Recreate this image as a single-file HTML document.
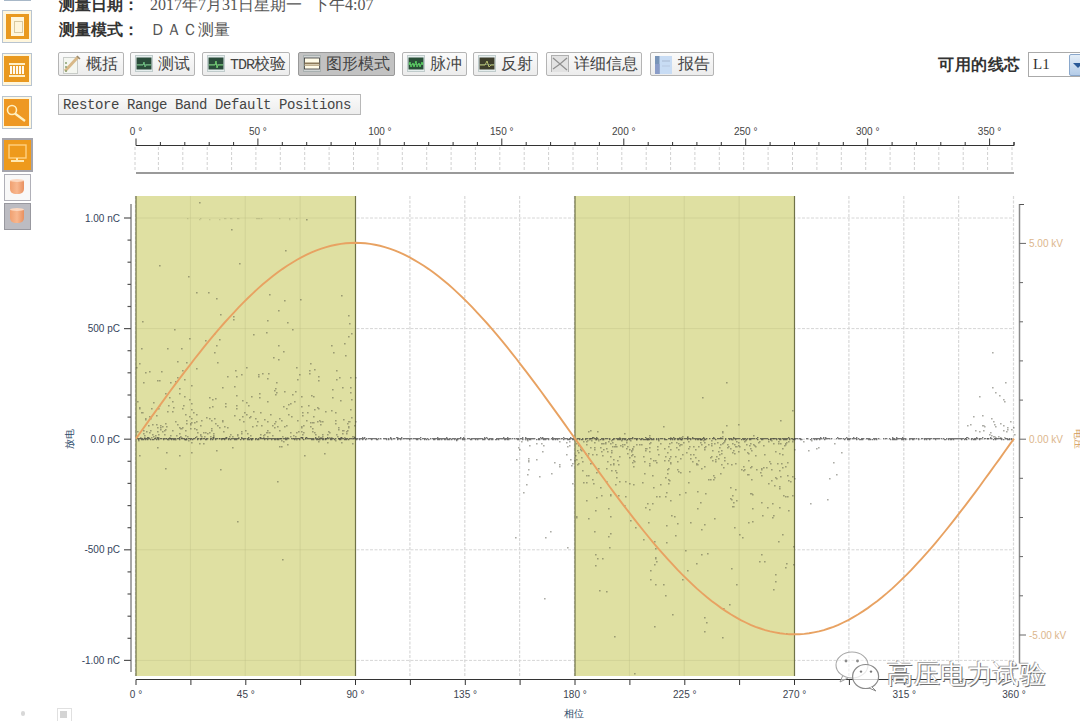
<!DOCTYPE html>
<html><head><meta charset="utf-8">
<style>
html,body{margin:0;padding:0;background:#fff;}
body{width:1080px;height:721px;overflow:hidden;position:relative;font-family:"Liberation Sans",sans-serif;}
.a{position:absolute;}
.lbl{font-weight:bold;font-size:16px;color:#333;}
.val{font-size:16px;color:#555;font-family:"Liberation Serif",serif;}
.btn{position:absolute;top:52px;height:22px;border:1px solid #b4b4b4;border-radius:2px;background:linear-gradient(#fbfbfb,#ececec);font-size:16px;color:#444;line-height:22px;box-sizing:content-box;}
.btn .ic{position:absolute;left:4px;top:2px;}
.btn span{position:absolute;left:27px;top:0;white-space:nowrap;}
.btn.on{background:#c2c2c2;border-color:#999;}
svg text{font-family:"Liberation Sans",sans-serif;}
.rl{font-size:10px;fill:#444;text-anchor:middle;}
.yl{font-size:10px;fill:#34445c;text-anchor:end;}
.yt{font-size:10px;fill:#2c4a6a;text-anchor:middle;}
.rlab{font-size:10px;fill:#dcb68c;}
.rt{font-size:10px;fill:#d49a58;text-anchor:middle;}
.bl{font-size:10px;fill:#3c4450;text-anchor:middle;}
.bt{font-size:10px;fill:#2c4a6a;text-anchor:middle;}
</style></head><body>
<svg class="a" style="left:0;top:0" width="1080" height="721" viewBox="0 0 1080 721">
<line x1="135.0" y1="147" x2="135.0" y2="171" stroke="#d0d0d0" stroke-width="1" stroke-dasharray="3,2"/>
<line x1="158.4" y1="147" x2="158.4" y2="171" stroke="#d0d0d0" stroke-width="1" stroke-dasharray="3,2"/>
<line x1="182.8" y1="147" x2="182.8" y2="171" stroke="#d0d0d0" stroke-width="1" stroke-dasharray="3,2"/>
<line x1="207.2" y1="147" x2="207.2" y2="171" stroke="#d0d0d0" stroke-width="1" stroke-dasharray="3,2"/>
<line x1="231.6" y1="147" x2="231.6" y2="171" stroke="#d0d0d0" stroke-width="1" stroke-dasharray="3,2"/>
<line x1="255.9" y1="147" x2="255.9" y2="171" stroke="#d0d0d0" stroke-width="1" stroke-dasharray="3,2"/>
<line x1="280.3" y1="147" x2="280.3" y2="171" stroke="#d0d0d0" stroke-width="1" stroke-dasharray="3,2"/>
<line x1="304.7" y1="147" x2="304.7" y2="171" stroke="#d0d0d0" stroke-width="1" stroke-dasharray="3,2"/>
<line x1="329.1" y1="147" x2="329.1" y2="171" stroke="#d0d0d0" stroke-width="1" stroke-dasharray="3,2"/>
<line x1="353.5" y1="147" x2="353.5" y2="171" stroke="#d0d0d0" stroke-width="1" stroke-dasharray="3,2"/>
<line x1="377.9" y1="147" x2="377.9" y2="171" stroke="#d0d0d0" stroke-width="1" stroke-dasharray="3,2"/>
<line x1="402.3" y1="147" x2="402.3" y2="171" stroke="#d0d0d0" stroke-width="1" stroke-dasharray="3,2"/>
<line x1="426.7" y1="147" x2="426.7" y2="171" stroke="#d0d0d0" stroke-width="1" stroke-dasharray="3,2"/>
<line x1="451.1" y1="147" x2="451.1" y2="171" stroke="#d0d0d0" stroke-width="1" stroke-dasharray="3,2"/>
<line x1="475.4" y1="147" x2="475.4" y2="171" stroke="#d0d0d0" stroke-width="1" stroke-dasharray="3,2"/>
<line x1="499.8" y1="147" x2="499.8" y2="171" stroke="#d0d0d0" stroke-width="1" stroke-dasharray="3,2"/>
<line x1="524.2" y1="147" x2="524.2" y2="171" stroke="#d0d0d0" stroke-width="1" stroke-dasharray="3,2"/>
<line x1="548.6" y1="147" x2="548.6" y2="171" stroke="#d0d0d0" stroke-width="1" stroke-dasharray="3,2"/>
<line x1="573.0" y1="147" x2="573.0" y2="171" stroke="#d0d0d0" stroke-width="1" stroke-dasharray="3,2"/>
<line x1="597.4" y1="147" x2="597.4" y2="171" stroke="#d0d0d0" stroke-width="1" stroke-dasharray="3,2"/>
<line x1="621.8" y1="147" x2="621.8" y2="171" stroke="#d0d0d0" stroke-width="1" stroke-dasharray="3,2"/>
<line x1="646.2" y1="147" x2="646.2" y2="171" stroke="#d0d0d0" stroke-width="1" stroke-dasharray="3,2"/>
<line x1="670.6" y1="147" x2="670.6" y2="171" stroke="#d0d0d0" stroke-width="1" stroke-dasharray="3,2"/>
<line x1="694.9" y1="147" x2="694.9" y2="171" stroke="#d0d0d0" stroke-width="1" stroke-dasharray="3,2"/>
<line x1="719.3" y1="147" x2="719.3" y2="171" stroke="#d0d0d0" stroke-width="1" stroke-dasharray="3,2"/>
<line x1="743.7" y1="147" x2="743.7" y2="171" stroke="#d0d0d0" stroke-width="1" stroke-dasharray="3,2"/>
<line x1="768.1" y1="147" x2="768.1" y2="171" stroke="#d0d0d0" stroke-width="1" stroke-dasharray="3,2"/>
<line x1="792.5" y1="147" x2="792.5" y2="171" stroke="#d0d0d0" stroke-width="1" stroke-dasharray="3,2"/>
<line x1="816.9" y1="147" x2="816.9" y2="171" stroke="#d0d0d0" stroke-width="1" stroke-dasharray="3,2"/>
<line x1="841.3" y1="147" x2="841.3" y2="171" stroke="#d0d0d0" stroke-width="1" stroke-dasharray="3,2"/>
<line x1="865.7" y1="147" x2="865.7" y2="171" stroke="#d0d0d0" stroke-width="1" stroke-dasharray="3,2"/>
<line x1="890.1" y1="147" x2="890.1" y2="171" stroke="#d0d0d0" stroke-width="1" stroke-dasharray="3,2"/>
<line x1="914.4" y1="147" x2="914.4" y2="171" stroke="#d0d0d0" stroke-width="1" stroke-dasharray="3,2"/>
<line x1="938.8" y1="147" x2="938.8" y2="171" stroke="#d0d0d0" stroke-width="1" stroke-dasharray="3,2"/>
<line x1="963.2" y1="147" x2="963.2" y2="171" stroke="#d0d0d0" stroke-width="1" stroke-dasharray="3,2"/>
<line x1="987.6" y1="147" x2="987.6" y2="171" stroke="#d0d0d0" stroke-width="1" stroke-dasharray="3,2"/>
<line x1="1012.0" y1="147" x2="1012.0" y2="171" stroke="#d0d0d0" stroke-width="1" stroke-dasharray="3,2"/>
<line x1="136.0" y1="145.5" x2="1014.0000000000001" y2="145.5" stroke="#333" stroke-width="1.2"/>
<line x1="136.0" y1="173" x2="1014.0000000000001" y2="173" stroke="#9a9a9a" stroke-width="2"/>
<line x1="136.0" y1="138.5" x2="136.0" y2="145.5" stroke="#333" stroke-width="1"/>
<line x1="160.4" y1="142" x2="160.4" y2="145.5" stroke="#333" stroke-width="1"/>
<line x1="184.8" y1="142" x2="184.8" y2="145.5" stroke="#333" stroke-width="1"/>
<line x1="209.2" y1="142" x2="209.2" y2="145.5" stroke="#333" stroke-width="1"/>
<line x1="233.6" y1="142" x2="233.6" y2="145.5" stroke="#333" stroke-width="1"/>
<line x1="257.9" y1="138.5" x2="257.9" y2="145.5" stroke="#333" stroke-width="1"/>
<line x1="282.3" y1="142" x2="282.3" y2="145.5" stroke="#333" stroke-width="1"/>
<line x1="306.7" y1="142" x2="306.7" y2="145.5" stroke="#333" stroke-width="1"/>
<line x1="331.1" y1="142" x2="331.1" y2="145.5" stroke="#333" stroke-width="1"/>
<line x1="355.5" y1="142" x2="355.5" y2="145.5" stroke="#333" stroke-width="1"/>
<line x1="379.9" y1="138.5" x2="379.9" y2="145.5" stroke="#333" stroke-width="1"/>
<line x1="404.3" y1="142" x2="404.3" y2="145.5" stroke="#333" stroke-width="1"/>
<line x1="428.7" y1="142" x2="428.7" y2="145.5" stroke="#333" stroke-width="1"/>
<line x1="453.1" y1="142" x2="453.1" y2="145.5" stroke="#333" stroke-width="1"/>
<line x1="477.4" y1="142" x2="477.4" y2="145.5" stroke="#333" stroke-width="1"/>
<line x1="501.8" y1="138.5" x2="501.8" y2="145.5" stroke="#333" stroke-width="1"/>
<line x1="526.2" y1="142" x2="526.2" y2="145.5" stroke="#333" stroke-width="1"/>
<line x1="550.6" y1="142" x2="550.6" y2="145.5" stroke="#333" stroke-width="1"/>
<line x1="575.0" y1="142" x2="575.0" y2="145.5" stroke="#333" stroke-width="1"/>
<line x1="599.4" y1="142" x2="599.4" y2="145.5" stroke="#333" stroke-width="1"/>
<line x1="623.8" y1="138.5" x2="623.8" y2="145.5" stroke="#333" stroke-width="1"/>
<line x1="648.2" y1="142" x2="648.2" y2="145.5" stroke="#333" stroke-width="1"/>
<line x1="672.6" y1="142" x2="672.6" y2="145.5" stroke="#333" stroke-width="1"/>
<line x1="696.9" y1="142" x2="696.9" y2="145.5" stroke="#333" stroke-width="1"/>
<line x1="721.3" y1="142" x2="721.3" y2="145.5" stroke="#333" stroke-width="1"/>
<line x1="745.7" y1="138.5" x2="745.7" y2="145.5" stroke="#333" stroke-width="1"/>
<line x1="770.1" y1="142" x2="770.1" y2="145.5" stroke="#333" stroke-width="1"/>
<line x1="794.5" y1="142" x2="794.5" y2="145.5" stroke="#333" stroke-width="1"/>
<line x1="818.9" y1="142" x2="818.9" y2="145.5" stroke="#333" stroke-width="1"/>
<line x1="843.3" y1="142" x2="843.3" y2="145.5" stroke="#333" stroke-width="1"/>
<line x1="867.7" y1="138.5" x2="867.7" y2="145.5" stroke="#333" stroke-width="1"/>
<line x1="892.1" y1="142" x2="892.1" y2="145.5" stroke="#333" stroke-width="1"/>
<line x1="916.4" y1="142" x2="916.4" y2="145.5" stroke="#333" stroke-width="1"/>
<line x1="940.8" y1="142" x2="940.8" y2="145.5" stroke="#333" stroke-width="1"/>
<line x1="965.2" y1="142" x2="965.2" y2="145.5" stroke="#333" stroke-width="1"/>
<line x1="989.6" y1="138.5" x2="989.6" y2="145.5" stroke="#333" stroke-width="1"/>
<line x1="1014.0" y1="142" x2="1014.0" y2="145.5" stroke="#333" stroke-width="1"/>
<line x1="1014.0" y1="142" x2="1014.0" y2="145.5" stroke="#333" stroke-width="1"/>
<text x="136.0" y="135" class="rl">0 °</text>
<text x="257.9" y="135" class="rl">50 °</text>
<text x="379.9" y="135" class="rl">100 °</text>
<text x="501.8" y="135" class="rl">150 °</text>
<text x="623.8" y="135" class="rl">200 °</text>
<text x="745.7" y="135" class="rl">250 °</text>
<text x="867.7" y="135" class="rl">300 °</text>
<text x="989.6" y="135" class="rl">350 °</text>
<line x1="135.5" y1="196" x2="135.5" y2="676" stroke="#d8d8d8" stroke-width="1.2" stroke-dasharray="3,1.5"/>
<line x1="190.4" y1="196" x2="190.4" y2="676" stroke="#d8d8d8" stroke-width="1.2" stroke-dasharray="3,1.5"/>
<line x1="245.2" y1="196" x2="245.2" y2="676" stroke="#d8d8d8" stroke-width="1.2" stroke-dasharray="3,1.5"/>
<line x1="300.1" y1="196" x2="300.1" y2="676" stroke="#d8d8d8" stroke-width="1.2" stroke-dasharray="3,1.5"/>
<line x1="355.0" y1="196" x2="355.0" y2="676" stroke="#d8d8d8" stroke-width="1.2" stroke-dasharray="3,1.5"/>
<line x1="409.9" y1="196" x2="409.9" y2="676" stroke="#d8d8d8" stroke-width="1.2" stroke-dasharray="3,1.5"/>
<line x1="464.8" y1="196" x2="464.8" y2="676" stroke="#d8d8d8" stroke-width="1.2" stroke-dasharray="3,1.5"/>
<line x1="519.6" y1="196" x2="519.6" y2="676" stroke="#d8d8d8" stroke-width="1.2" stroke-dasharray="3,1.5"/>
<line x1="574.5" y1="196" x2="574.5" y2="676" stroke="#d8d8d8" stroke-width="1.2" stroke-dasharray="3,1.5"/>
<line x1="629.4" y1="196" x2="629.4" y2="676" stroke="#d8d8d8" stroke-width="1.2" stroke-dasharray="3,1.5"/>
<line x1="684.2" y1="196" x2="684.2" y2="676" stroke="#d8d8d8" stroke-width="1.2" stroke-dasharray="3,1.5"/>
<line x1="739.1" y1="196" x2="739.1" y2="676" stroke="#d8d8d8" stroke-width="1.2" stroke-dasharray="3,1.5"/>
<line x1="794.0" y1="196" x2="794.0" y2="676" stroke="#d8d8d8" stroke-width="1.2" stroke-dasharray="3,1.5"/>
<line x1="848.9" y1="196" x2="848.9" y2="676" stroke="#d8d8d8" stroke-width="1.2" stroke-dasharray="3,1.5"/>
<line x1="903.8" y1="196" x2="903.8" y2="676" stroke="#d8d8d8" stroke-width="1.2" stroke-dasharray="3,1.5"/>
<line x1="958.6" y1="196" x2="958.6" y2="676" stroke="#d8d8d8" stroke-width="1.2" stroke-dasharray="3,1.5"/>
<line x1="1013.5" y1="196" x2="1013.5" y2="676" stroke="#d8d8d8" stroke-width="1.2" stroke-dasharray="3,1.5"/>
<line x1="136.0" y1="218.0" x2="1014.0000000000001" y2="218.0" stroke="#d6d6d6" stroke-width="1" stroke-dasharray="3,1.5"/>
<line x1="136.0" y1="328.6" x2="1014.0000000000001" y2="328.6" stroke="#d6d6d6" stroke-width="1" stroke-dasharray="3,1.5"/>
<line x1="136.0" y1="439.2" x2="1014.0000000000001" y2="439.2" stroke="#d6d6d6" stroke-width="1" stroke-dasharray="3,1.5"/>
<line x1="136.0" y1="549.8" x2="1014.0000000000001" y2="549.8" stroke="#d6d6d6" stroke-width="1" stroke-dasharray="3,1.5"/>
<line x1="136.0" y1="660.4" x2="1014.0000000000001" y2="660.4" stroke="#d6d6d6" stroke-width="1" stroke-dasharray="3,1.5"/>
<rect x="136.0" y="196" width="219.5" height="480" fill="#dfe0a2"/>
<rect x="575.0" y="196" width="219.5" height="480" fill="#dfe0a2"/>
<line x1="190.4" y1="196" x2="190.4" y2="676" stroke="#b8bb80" stroke-opacity="0.35" stroke-width="1"/>
<line x1="245.2" y1="196" x2="245.2" y2="676" stroke="#b8bb80" stroke-opacity="0.35" stroke-width="1"/>
<line x1="300.1" y1="196" x2="300.1" y2="676" stroke="#b8bb80" stroke-opacity="0.35" stroke-width="1"/>
<line x1="136.0" y1="218.0" x2="355.5" y2="218.0" stroke="#b8bb80" stroke-opacity="0.35" stroke-width="1"/>
<line x1="136.0" y1="328.6" x2="355.5" y2="328.6" stroke="#b8bb80" stroke-opacity="0.35" stroke-width="1"/>
<line x1="136.0" y1="439.2" x2="355.5" y2="439.2" stroke="#b8bb80" stroke-opacity="0.35" stroke-width="1"/>
<line x1="136.0" y1="549.8" x2="355.5" y2="549.8" stroke="#b8bb80" stroke-opacity="0.35" stroke-width="1"/>
<line x1="136.0" y1="660.4" x2="355.5" y2="660.4" stroke="#b8bb80" stroke-opacity="0.35" stroke-width="1"/>
<line x1="629.4" y1="196" x2="629.4" y2="676" stroke="#b8bb80" stroke-opacity="0.35" stroke-width="1"/>
<line x1="684.2" y1="196" x2="684.2" y2="676" stroke="#b8bb80" stroke-opacity="0.35" stroke-width="1"/>
<line x1="739.1" y1="196" x2="739.1" y2="676" stroke="#b8bb80" stroke-opacity="0.35" stroke-width="1"/>
<line x1="575.0" y1="218.0" x2="794.5" y2="218.0" stroke="#b8bb80" stroke-opacity="0.35" stroke-width="1"/>
<line x1="575.0" y1="328.6" x2="794.5" y2="328.6" stroke="#b8bb80" stroke-opacity="0.35" stroke-width="1"/>
<line x1="575.0" y1="439.2" x2="794.5" y2="439.2" stroke="#b8bb80" stroke-opacity="0.35" stroke-width="1"/>
<line x1="575.0" y1="549.8" x2="794.5" y2="549.8" stroke="#b8bb80" stroke-opacity="0.35" stroke-width="1"/>
<line x1="575.0" y1="660.4" x2="794.5" y2="660.4" stroke="#b8bb80" stroke-opacity="0.35" stroke-width="1"/>
<line x1="136.0" y1="196" x2="136.0" y2="676" stroke="#707248" stroke-width="1.2"/>
<line x1="355.5" y1="196" x2="355.5" y2="676" stroke="#707248" stroke-width="1.2"/>
<line x1="575.0" y1="196" x2="575.0" y2="676" stroke="#707248" stroke-width="1.2"/>
<line x1="794.5" y1="196" x2="794.5" y2="676" stroke="#707248" stroke-width="1.2"/>
<line x1="131" y1="204" x2="131" y2="672" stroke="#8a8a8a" stroke-width="1.5"/>
<line x1="124" y1="660.4" x2="131" y2="660.4" stroke="#555" stroke-width="1.2"/>
<line x1="127.5" y1="638.3" x2="131" y2="638.3" stroke="#555" stroke-width="1.2"/>
<line x1="127.5" y1="616.2" x2="131" y2="616.2" stroke="#555" stroke-width="1.2"/>
<line x1="127.5" y1="594.0" x2="131" y2="594.0" stroke="#555" stroke-width="1.2"/>
<line x1="127.5" y1="571.9" x2="131" y2="571.9" stroke="#555" stroke-width="1.2"/>
<line x1="124" y1="549.8" x2="131" y2="549.8" stroke="#555" stroke-width="1.2"/>
<line x1="127.5" y1="527.7" x2="131" y2="527.7" stroke="#555" stroke-width="1.2"/>
<line x1="127.5" y1="505.6" x2="131" y2="505.6" stroke="#555" stroke-width="1.2"/>
<line x1="127.5" y1="483.4" x2="131" y2="483.4" stroke="#555" stroke-width="1.2"/>
<line x1="127.5" y1="461.3" x2="131" y2="461.3" stroke="#555" stroke-width="1.2"/>
<line x1="124" y1="439.2" x2="131" y2="439.2" stroke="#555" stroke-width="1.2"/>
<line x1="127.5" y1="417.1" x2="131" y2="417.1" stroke="#555" stroke-width="1.2"/>
<line x1="127.5" y1="395.0" x2="131" y2="395.0" stroke="#555" stroke-width="1.2"/>
<line x1="127.5" y1="372.8" x2="131" y2="372.8" stroke="#555" stroke-width="1.2"/>
<line x1="127.5" y1="350.7" x2="131" y2="350.7" stroke="#555" stroke-width="1.2"/>
<line x1="124" y1="328.6" x2="131" y2="328.6" stroke="#555" stroke-width="1.2"/>
<line x1="127.5" y1="306.5" x2="131" y2="306.5" stroke="#555" stroke-width="1.2"/>
<line x1="127.5" y1="284.4" x2="131" y2="284.4" stroke="#555" stroke-width="1.2"/>
<line x1="127.5" y1="262.2" x2="131" y2="262.2" stroke="#555" stroke-width="1.2"/>
<line x1="127.5" y1="240.1" x2="131" y2="240.1" stroke="#555" stroke-width="1.2"/>
<line x1="124" y1="218.0" x2="131" y2="218.0" stroke="#555" stroke-width="1.2"/>
<text x="120" y="221.5" class="yl">1.00 nC</text>
<text x="120" y="332.1" class="yl">500 pC</text>
<text x="120" y="442.7" class="yl">0.0 pC</text>
<text x="120" y="553.3" class="yl">-500 pC</text>
<text x="120" y="663.9" class="yl">-1.00 nC</text>
<text x="0" y="0" class="yt" transform="translate(73,439) rotate(-90)">放电</text>
<line x1="1019.5" y1="204" x2="1019.5" y2="663" stroke="#8a8a8a" stroke-width="1.5"/>
<line x1="1019.5" y1="204.5" x2="1024" y2="204.5" stroke="#555" stroke-width="1"/>
<line x1="1019.5" y1="635.0" x2="1026" y2="635.0" stroke="#666" stroke-width="1"/>
<line x1="1019.5" y1="595.8" x2="1023" y2="595.8" stroke="#666" stroke-width="1"/>
<line x1="1019.5" y1="556.6" x2="1023" y2="556.6" stroke="#666" stroke-width="1"/>
<line x1="1019.5" y1="517.5" x2="1023" y2="517.5" stroke="#666" stroke-width="1"/>
<line x1="1019.5" y1="478.3" x2="1023" y2="478.3" stroke="#666" stroke-width="1"/>
<line x1="1019.5" y1="439.2" x2="1026" y2="439.2" stroke="#666" stroke-width="1"/>
<line x1="1019.5" y1="400.1" x2="1023" y2="400.1" stroke="#666" stroke-width="1"/>
<line x1="1019.5" y1="360.9" x2="1023" y2="360.9" stroke="#666" stroke-width="1"/>
<line x1="1019.5" y1="321.8" x2="1023" y2="321.8" stroke="#666" stroke-width="1"/>
<line x1="1019.5" y1="282.6" x2="1023" y2="282.6" stroke="#666" stroke-width="1"/>
<line x1="1019.5" y1="243.4" x2="1026" y2="243.4" stroke="#666" stroke-width="1"/>
<text x="1029" y="246.9" class="rlab">5.00 kV</text>
<text x="1029" y="442.7" class="rlab">0.00 kV</text>
<text x="1029" y="638.5" class="rlab">-5.00 kV</text>
<text x="0" y="0" class="rt" transform="translate(1075,439) rotate(90)">电压</text>
<line x1="136.0" y1="679.5" x2="1014.0000000000001" y2="679.5" stroke="#333" stroke-width="1.2"/>
<line x1="136.0" y1="679.5" x2="136.0" y2="685" stroke="#333" stroke-width="1"/>
<line x1="190.9" y1="679.5" x2="190.9" y2="685" stroke="#333" stroke-width="1"/>
<line x1="245.8" y1="679.5" x2="245.8" y2="685" stroke="#333" stroke-width="1"/>
<line x1="300.6" y1="679.5" x2="300.6" y2="685" stroke="#333" stroke-width="1"/>
<line x1="355.5" y1="679.5" x2="355.5" y2="685" stroke="#333" stroke-width="1"/>
<line x1="410.4" y1="679.5" x2="410.4" y2="685" stroke="#333" stroke-width="1"/>
<line x1="465.3" y1="679.5" x2="465.3" y2="685" stroke="#333" stroke-width="1"/>
<line x1="520.1" y1="679.5" x2="520.1" y2="685" stroke="#333" stroke-width="1"/>
<line x1="575.0" y1="679.5" x2="575.0" y2="685" stroke="#333" stroke-width="1"/>
<line x1="629.9" y1="679.5" x2="629.9" y2="685" stroke="#333" stroke-width="1"/>
<line x1="684.8" y1="679.5" x2="684.8" y2="685" stroke="#333" stroke-width="1"/>
<line x1="739.6" y1="679.5" x2="739.6" y2="685" stroke="#333" stroke-width="1"/>
<line x1="794.5" y1="679.5" x2="794.5" y2="685" stroke="#333" stroke-width="1"/>
<line x1="849.4" y1="679.5" x2="849.4" y2="685" stroke="#333" stroke-width="1"/>
<line x1="904.3" y1="679.5" x2="904.3" y2="685" stroke="#333" stroke-width="1"/>
<line x1="959.1" y1="679.5" x2="959.1" y2="685" stroke="#333" stroke-width="1"/>
<line x1="1014.0" y1="679.5" x2="1014.0" y2="685" stroke="#333" stroke-width="1"/>
<text x="136.0" y="698" class="bl">0 °</text>
<text x="245.8" y="698" class="bl">45 °</text>
<text x="355.5" y="698" class="bl">90 °</text>
<text x="465.3" y="698" class="bl">135 °</text>
<text x="575.0" y="698" class="bl">180 °</text>
<text x="684.8" y="698" class="bl">225 °</text>
<text x="794.5" y="698" class="bl">270 °</text>
<text x="904.3" y="698" class="bl">315 °</text>
<text x="1014.0" y="698" class="bl">360 °</text>
<text x="574" y="717" class="bt">相位</text>
<path d="M260 434h1.6v1.4h-1.6zM196 421h1.6v1.4h-1.6zM200 425h1.6v1.4h-1.6zM312 428h1.6v1.4h-1.6zM236 408h1.6v1.4h-1.6zM234 415h1.6v1.4h-1.6zM149 432h1.6v1.4h-1.6zM276 438h1.6v1.4h-1.6zM325 438h1.6v1.4h-1.6zM267 436h1.6v1.4h-1.6zM338 429h1.6v1.4h-1.6zM312 431h1.6v1.4h-1.6zM284 426h1.6v1.4h-1.6zM201 436h1.6v1.4h-1.6zM320 437h1.6v1.4h-1.6zM337 436h1.6v1.4h-1.6zM158 437h1.6v1.4h-1.6zM308 405h1.6v1.4h-1.6zM227 427h1.6v1.4h-1.6zM193 412h1.6v1.4h-1.6zM287 437h1.6v1.4h-1.6zM148 425h1.6v1.4h-1.6zM145 418h1.6v1.4h-1.6zM200 435h1.6v1.4h-1.6zM264 434h1.6v1.4h-1.6zM259 437h1.6v1.4h-1.6zM336 434h1.6v1.4h-1.6zM321 437h1.6v1.4h-1.6zM311 395h1.6v1.4h-1.6zM222 438h1.6v1.4h-1.6zM219 427h1.6v1.4h-1.6zM185 430h1.6v1.4h-1.6zM157 431h1.6v1.4h-1.6zM296 432h1.6v1.4h-1.6zM285 437h1.6v1.4h-1.6zM318 437h1.6v1.4h-1.6zM339 377h1.6v1.4h-1.6zM342 430h1.6v1.4h-1.6zM200 434h1.6v1.4h-1.6zM301 431h1.6v1.4h-1.6zM340 437h1.6v1.4h-1.6zM242 416h1.6v1.4h-1.6zM267 430h1.6v1.4h-1.6zM155 437h1.6v1.4h-1.6zM196 414h1.6v1.4h-1.6zM322 436h1.6v1.4h-1.6zM339 438h1.6v1.4h-1.6zM267 401h1.6v1.4h-1.6zM212 406h1.6v1.4h-1.6zM280 438h1.6v1.4h-1.6zM209 432h1.6v1.4h-1.6zM190 423h1.6v1.4h-1.6zM175 421h1.6v1.4h-1.6zM201 438h1.6v1.4h-1.6zM259 437h1.6v1.4h-1.6zM257 421h1.6v1.4h-1.6zM267 432h1.6v1.4h-1.6zM143 430h1.6v1.4h-1.6zM157 427h1.6v1.4h-1.6zM165 429h1.6v1.4h-1.6zM213 433h1.6v1.4h-1.6zM282 436h1.6v1.4h-1.6zM173 407h1.6v1.4h-1.6zM209 418h1.6v1.4h-1.6zM328 431h1.6v1.4h-1.6zM169 437h1.6v1.4h-1.6zM329 437h1.6v1.4h-1.6zM245 430h1.6v1.4h-1.6zM162 431h1.6v1.4h-1.6zM172 430h1.6v1.4h-1.6zM247 433h1.6v1.4h-1.6zM179 433h1.6v1.4h-1.6zM181 437h1.6v1.4h-1.6zM189 416h1.6v1.4h-1.6zM246 414h1.6v1.4h-1.6zM139 407h1.6v1.4h-1.6zM243 421h1.6v1.4h-1.6zM261 425h1.6v1.4h-1.6zM186 423h1.6v1.4h-1.6zM170 435h1.6v1.4h-1.6zM143 433h1.6v1.4h-1.6zM250 435h1.6v1.4h-1.6zM331 437h1.6v1.4h-1.6zM263 435h1.6v1.4h-1.6zM267 421h1.6v1.4h-1.6zM292 438h1.6v1.4h-1.6zM190 428h1.6v1.4h-1.6zM352 438h1.6v1.4h-1.6zM272 425h1.6v1.4h-1.6zM315 434h1.6v1.4h-1.6zM314 432h1.6v1.4h-1.6zM338 438h1.6v1.4h-1.6zM342 433h1.6v1.4h-1.6zM225 437h1.6v1.4h-1.6zM190 424h1.6v1.4h-1.6zM285 437h1.6v1.4h-1.6zM212 437h1.6v1.4h-1.6zM180 436h1.6v1.4h-1.6zM209 397h1.6v1.4h-1.6zM355 421h1.6v1.4h-1.6zM241 431h1.6v1.4h-1.6zM307 412h1.6v1.4h-1.6zM301 427h1.6v1.4h-1.6zM180 428h1.6v1.4h-1.6zM322 421h1.6v1.4h-1.6zM156 424h1.6v1.4h-1.6zM213 436h1.6v1.4h-1.6zM348 426h1.6v1.4h-1.6zM300 437h1.6v1.4h-1.6zM318 408h1.6v1.4h-1.6zM335 423h1.6v1.4h-1.6zM319 420h1.6v1.4h-1.6zM266 432h1.6v1.4h-1.6zM317 421h1.6v1.4h-1.6zM327 434h1.6v1.4h-1.6zM347 430h1.6v1.4h-1.6zM344 437h1.6v1.4h-1.6zM349 421h1.6v1.4h-1.6zM191 418h1.6v1.4h-1.6zM187 436h1.6v1.4h-1.6zM237 435h1.6v1.4h-1.6zM244 412h1.6v1.4h-1.6zM286 425h1.6v1.4h-1.6zM222 421h1.6v1.4h-1.6zM310 426h1.6v1.4h-1.6zM343 419h1.6v1.4h-1.6zM225 437h1.6v1.4h-1.6zM279 418h1.6v1.4h-1.6zM211 428h1.6v1.4h-1.6zM320 421h1.6v1.4h-1.6zM137 431h1.6v1.4h-1.6zM140 437h1.6v1.4h-1.6zM314 432h1.6v1.4h-1.6zM269 432h1.6v1.4h-1.6zM210 436h1.6v1.4h-1.6zM214 418h1.6v1.4h-1.6zM272 435h1.6v1.4h-1.6zM155 435h1.6v1.4h-1.6zM290 432h1.6v1.4h-1.6zM281 420h1.6v1.4h-1.6zM162 426h1.6v1.4h-1.6zM145 419h1.6v1.4h-1.6zM176 435h1.6v1.4h-1.6zM346 433h1.6v1.4h-1.6zM185 414h1.6v1.4h-1.6zM270 414h1.6v1.4h-1.6zM223 431h1.6v1.4h-1.6zM346 431h1.6v1.4h-1.6zM353 436h1.6v1.4h-1.6zM318 436h1.6v1.4h-1.6zM252 438h1.6v1.4h-1.6zM174 329h1.6v1.4h-1.6zM236 376h1.6v1.4h-1.6zM191 422h1.6v1.4h-1.6zM158 408h1.6v1.4h-1.6zM325 411h1.6v1.4h-1.6zM219 339h1.6v1.4h-1.6zM332 397h1.6v1.4h-1.6zM153 402h1.6v1.4h-1.6zM233 319h1.6v1.4h-1.6zM215 398h1.6v1.4h-1.6zM275 421h1.6v1.4h-1.6zM251 396h1.6v1.4h-1.6zM335 412h1.6v1.4h-1.6zM216 298h1.6v1.4h-1.6zM149 371h1.6v1.4h-1.6zM286 408h1.6v1.4h-1.6zM234 386h1.6v1.4h-1.6zM332 389h1.6v1.4h-1.6zM301 437h1.6v1.4h-1.6zM207 433h1.6v1.4h-1.6zM345 355h1.6v1.4h-1.6zM168 405h1.6v1.4h-1.6zM263 437h1.6v1.4h-1.6zM222 387h1.6v1.4h-1.6zM277 426h1.6v1.4h-1.6zM303 425h1.6v1.4h-1.6zM255 418h1.6v1.4h-1.6zM351 399h1.6v1.4h-1.6zM313 396h1.6v1.4h-1.6zM220 314h1.6v1.4h-1.6zM292 394h1.6v1.4h-1.6zM197 432h1.6v1.4h-1.6zM262 373h1.6v1.4h-1.6zM310 422h1.6v1.4h-1.6zM167 411h1.6v1.4h-1.6zM329 432h1.6v1.4h-1.6zM298 431h1.6v1.4h-1.6zM204 436h1.6v1.4h-1.6zM201 420h1.6v1.4h-1.6zM348 315h1.6v1.4h-1.6zM177 424h1.6v1.4h-1.6zM343 430h1.6v1.4h-1.6zM206 417h1.6v1.4h-1.6zM160 427h1.6v1.4h-1.6zM222 420h1.6v1.4h-1.6zM348 427h1.6v1.4h-1.6zM181 348h1.6v1.4h-1.6zM235 370h1.6v1.4h-1.6zM276 382h1.6v1.4h-1.6zM205 432h1.6v1.4h-1.6zM302 415h1.6v1.4h-1.6zM259 397h1.6v1.4h-1.6zM301 426h1.6v1.4h-1.6zM216 345h1.6v1.4h-1.6zM252 426h1.6v1.4h-1.6zM274 427h1.6v1.4h-1.6zM305 437h1.6v1.4h-1.6zM317 407h1.6v1.4h-1.6zM214 333h1.6v1.4h-1.6zM194 428h1.6v1.4h-1.6zM151 408h1.6v1.4h-1.6zM301 396h1.6v1.4h-1.6zM227 376h1.6v1.4h-1.6zM160 425h1.6v1.4h-1.6zM278 310h1.6v1.4h-1.6zM275 394h1.6v1.4h-1.6zM306 420h1.6v1.4h-1.6zM342 387h1.6v1.4h-1.6zM211 420h1.6v1.4h-1.6zM313 422h1.6v1.4h-1.6zM177 361h1.6v1.4h-1.6zM253 411h1.6v1.4h-1.6zM283 351h1.6v1.4h-1.6zM165 423h1.6v1.4h-1.6zM150 418h1.6v1.4h-1.6zM246 367h1.6v1.4h-1.6zM283 406h1.6v1.4h-1.6zM225 406h1.6v1.4h-1.6zM196 368h1.6v1.4h-1.6zM309 370h1.6v1.4h-1.6zM169 397h1.6v1.4h-1.6zM302 412h1.6v1.4h-1.6zM333 352h1.6v1.4h-1.6zM299 374h1.6v1.4h-1.6zM278 359h1.6v1.4h-1.6zM165 393h1.6v1.4h-1.6zM290 403h1.6v1.4h-1.6zM196 436h1.6v1.4h-1.6zM268 373h1.6v1.4h-1.6zM196 429h1.6v1.4h-1.6zM185 435h1.6v1.4h-1.6zM284 300h1.6v1.4h-1.6zM312 422h1.6v1.4h-1.6zM290 436h1.6v1.4h-1.6zM320 424h1.6v1.4h-1.6zM137 401h1.6v1.4h-1.6zM166 426h1.6v1.4h-1.6zM149 416h1.6v1.4h-1.6zM258 376h1.6v1.4h-1.6zM145 372h1.6v1.4h-1.6zM160 429h1.6v1.4h-1.6zM274 423h1.6v1.4h-1.6zM209 407h1.6v1.4h-1.6zM184 379h1.6v1.4h-1.6zM182 370h1.6v1.4h-1.6zM314 409h1.6v1.4h-1.6zM143 382h1.6v1.4h-1.6zM142 412h1.6v1.4h-1.6zM229 436h1.6v1.4h-1.6zM274 390h1.6v1.4h-1.6zM264 419h1.6v1.4h-1.6zM248 405h1.6v1.4h-1.6zM186 362h1.6v1.4h-1.6zM355 377h1.6v1.4h-1.6zM347 423h1.6v1.4h-1.6zM352 436h1.6v1.4h-1.6zM241 433h1.6v1.4h-1.6zM236 395h1.6v1.4h-1.6zM291 416h1.6v1.4h-1.6zM211 430h1.6v1.4h-1.6zM224 426h1.6v1.4h-1.6zM179 388h1.6v1.4h-1.6zM249 417h1.6v1.4h-1.6zM179 393h1.6v1.4h-1.6zM179 427h1.6v1.4h-1.6zM259 393h1.6v1.4h-1.6zM350 387h1.6v1.4h-1.6zM344 343h1.6v1.4h-1.6zM295 391h1.6v1.4h-1.6zM150 430h1.6v1.4h-1.6zM139 363h1.6v1.4h-1.6zM294 401h1.6v1.4h-1.6zM194 422h1.6v1.4h-1.6zM172 401h1.6v1.4h-1.6zM354 425h1.6v1.4h-1.6zM146 431h1.6v1.4h-1.6zM214 352h1.6v1.4h-1.6zM313 416h1.6v1.4h-1.6zM158 434h1.6v1.4h-1.6zM170 382h1.6v1.4h-1.6zM239 263h1.6v1.4h-1.6zM336 379h1.6v1.4h-1.6zM241 374h1.6v1.4h-1.6zM164 434h1.6v1.4h-1.6zM260 412h1.6v1.4h-1.6zM182 427h1.6v1.4h-1.6zM141 348h1.6v1.4h-1.6zM292 329h1.6v1.4h-1.6zM351 417h1.6v1.4h-1.6zM297 420h1.6v1.4h-1.6zM314 369h1.6v1.4h-1.6zM165 438h1.6v1.4h-1.6zM183 405h1.6v1.4h-1.6zM219 438h1.6v1.4h-1.6zM318 380h1.6v1.4h-1.6zM238 437h1.6v1.4h-1.6zM331 410h1.6v1.4h-1.6zM152 424h1.6v1.4h-1.6zM273 357h1.6v1.4h-1.6zM242 400h1.6v1.4h-1.6zM181 428h1.6v1.4h-1.6zM335 420h1.6v1.4h-1.6zM159 405h1.6v1.4h-1.6zM164 430h1.6v1.4h-1.6zM236 405h1.6v1.4h-1.6zM276 392h1.6v1.4h-1.6zM232 436h1.6v1.4h-1.6zM295 436h1.6v1.4h-1.6zM239 419h1.6v1.4h-1.6zM284 391h1.6v1.4h-1.6zM189 399h1.6v1.4h-1.6zM288 414h1.6v1.4h-1.6zM167 348h1.6v1.4h-1.6zM267 436h1.6v1.4h-1.6zM188 276h1.6v1.4h-1.6zM186 420h1.6v1.4h-1.6zM309 373h1.6v1.4h-1.6zM275 388h1.6v1.4h-1.6zM144 435h1.6v1.4h-1.6zM350 377h1.6v1.4h-1.6zM144 437h1.6v1.4h-1.6zM189 338h1.6v1.4h-1.6zM184 396h1.6v1.4h-1.6zM340 400h1.6v1.4h-1.6zM338 427h1.6v1.4h-1.6zM170 438h1.6v1.4h-1.6zM302 434h1.6v1.4h-1.6zM350 392h1.6v1.4h-1.6zM177 377h1.6v1.4h-1.6zM172 411h1.6v1.4h-1.6zM159 380h1.6v1.4h-1.6zM331 345h1.6v1.4h-1.6zM136 367h1.6v1.4h-1.6zM258 374h1.6v1.4h-1.6zM246 402h1.6v1.4h-1.6zM267 378h1.6v1.4h-1.6zM153 436h1.6v1.4h-1.6zM256 425h1.6v1.4h-1.6zM223 438h1.6v1.4h-1.6zM300 437h1.6v1.4h-1.6zM318 376h1.6v1.4h-1.6zM237 434h1.6v1.4h-1.6zM279 430h1.6v1.4h-1.6zM230 434h1.6v1.4h-1.6zM350 409h1.6v1.4h-1.6zM213 435h1.6v1.4h-1.6zM296 367h1.6v1.4h-1.6zM322 434h1.6v1.4h-1.6zM217 425h1.6v1.4h-1.6zM303 432h1.6v1.4h-1.6zM269 294h1.6v1.4h-1.6zM305 438h1.6v1.4h-1.6zM152 434h1.6v1.4h-1.6zM288 404h1.6v1.4h-1.6zM250 416h1.6v1.4h-1.6zM225 403h1.6v1.4h-1.6zM278 345h1.6v1.4h-1.6zM297 379h1.6v1.4h-1.6zM336 370h1.6v1.4h-1.6zM293 435h1.6v1.4h-1.6zM285 250h1.6v1.4h-1.6zM231 229h1.6v1.4h-1.6zM233 316h1.6v1.4h-1.6zM191 403h1.6v1.4h-1.6zM212 399h1.6v1.4h-1.6zM157 380h1.6v1.4h-1.6zM351 333h1.6v1.4h-1.6zM341 295h1.6v1.4h-1.6zM301 406h1.6v1.4h-1.6zM191 385h1.6v1.4h-1.6zM141 412h1.6v1.4h-1.6zM208 292h1.6v1.4h-1.6zM306 219h1.6v1.4h-1.6zM310 363h1.6v1.4h-1.6zM159 265h1.6v1.4h-1.6zM205 340h1.6v1.4h-1.6zM217 362h1.6v1.4h-1.6zM348 421h1.6v1.4h-1.6zM253 334h1.6v1.4h-1.6zM156 415h1.6v1.4h-1.6zM199 202h1.6v1.4h-1.6zM139 408h1.6v1.4h-1.6zM175 381h1.6v1.4h-1.6zM287 322h1.6v1.4h-1.6zM300 299h1.6v1.4h-1.6zM191 409h1.6v1.4h-1.6zM142 321h1.6v1.4h-1.6zM182 408h1.6v1.4h-1.6zM348 336h1.6v1.4h-1.6zM266 332h1.6v1.4h-1.6zM267 320h1.6v1.4h-1.6zM203 432h1.6v1.4h-1.6zM151 437h1.6v1.4h-1.6zM215 423h1.6v1.4h-1.6zM161 371h1.6v1.4h-1.6zM349 323h1.6v1.4h-1.6zM196 292h1.6v1.4h-1.6zM175 439h1.6v1.4h-1.6zM203 443h1.6v1.4h-1.6zM287 444h1.6v1.4h-1.6zM296 439h1.6v1.4h-1.6zM341 442h1.6v1.4h-1.6zM319 439h1.6v1.4h-1.6zM318 441h1.6v1.4h-1.6zM324 453h1.6v1.4h-1.6zM283 441h1.6v1.4h-1.6zM138 440h1.6v1.4h-1.6zM335 440h1.6v1.4h-1.6zM281 446h1.6v1.4h-1.6zM281 440h1.6v1.4h-1.6zM168 439h1.6v1.4h-1.6zM352 443h1.6v1.4h-1.6zM279 446h1.6v1.4h-1.6zM185 439h1.6v1.4h-1.6zM139 455h1.6v1.4h-1.6zM165 468h1.6v1.4h-1.6zM216 450h1.6v1.4h-1.6zM166 452h1.6v1.4h-1.6zM191 442h1.6v1.4h-1.6zM251 439h1.6v1.4h-1.6zM191 452h1.6v1.4h-1.6zM199 443h1.6v1.4h-1.6zM304 455h1.6v1.4h-1.6zM179 455h1.6v1.4h-1.6zM220 469h1.6v1.4h-1.6zM277 481h1.6v1.4h-1.6zM327 442h1.6v1.4h-1.6zM282 559h1.6v1.4h-1.6zM188 440h1.6v1.4h-1.6zM232 447h1.6v1.4h-1.6zM237 521h1.6v1.4h-1.6zM157 447h1.6v1.4h-1.6zM543 445h1.6v1.4h-1.6zM528 458h1.6v1.4h-1.6zM521 441h1.6v1.4h-1.6zM536 459h1.6v1.4h-1.6zM571 465h1.6v1.4h-1.6zM518 447h1.6v1.4h-1.6zM559 466h1.6v1.4h-1.6zM567 547h1.6v1.4h-1.6zM566 442h1.6v1.4h-1.6zM572 463h1.6v1.4h-1.6zM529 445h1.6v1.4h-1.6zM567 446h1.6v1.4h-1.6zM519 449h1.6v1.4h-1.6zM570 459h1.6v1.4h-1.6zM559 441h1.6v1.4h-1.6zM542 451h1.6v1.4h-1.6zM527 474h1.6v1.4h-1.6zM536 443h1.6v1.4h-1.6zM574 460h1.6v1.4h-1.6zM525 439h1.6v1.4h-1.6zM554 462h1.6v1.4h-1.6zM516 459h1.6v1.4h-1.6zM559 464h1.6v1.4h-1.6zM528 461h1.6v1.4h-1.6zM551 473h1.6v1.4h-1.6zM523 492h1.6v1.4h-1.6zM572 483h1.6v1.4h-1.6zM566 454h1.6v1.4h-1.6zM569 445h1.6v1.4h-1.6zM528 469h1.6v1.4h-1.6zM569 441h1.6v1.4h-1.6zM527 440h1.6v1.4h-1.6zM541 443h1.6v1.4h-1.6zM526 484h1.6v1.4h-1.6zM550 531h1.6v1.4h-1.6zM539 476h1.6v1.4h-1.6zM515 537h1.6v1.4h-1.6zM528 460h1.6v1.4h-1.6zM545 537h1.6v1.4h-1.6zM544 598h1.6v1.4h-1.6zM711 443h1.6v1.4h-1.6zM758 442h1.6v1.4h-1.6zM794 449h1.6v1.4h-1.6zM625 496h1.6v1.4h-1.6zM646 448h1.6v1.4h-1.6zM650 458h1.6v1.4h-1.6zM580 447h1.6v1.4h-1.6zM611 470h1.6v1.4h-1.6zM575 455h1.6v1.4h-1.6zM632 449h1.6v1.4h-1.6zM698 460h1.6v1.4h-1.6zM605 443h1.6v1.4h-1.6zM601 495h1.6v1.4h-1.6zM608 441h1.6v1.4h-1.6zM690 454h1.6v1.4h-1.6zM770 439h1.6v1.4h-1.6zM626 442h1.6v1.4h-1.6zM704 449h1.6v1.4h-1.6zM665 477h1.6v1.4h-1.6zM720 473h1.6v1.4h-1.6zM785 444h1.6v1.4h-1.6zM782 448h1.6v1.4h-1.6zM586 482h1.6v1.4h-1.6zM598 439h1.6v1.4h-1.6zM639 444h1.6v1.4h-1.6zM787 475h1.6v1.4h-1.6zM667 452h1.6v1.4h-1.6zM761 468h1.6v1.4h-1.6zM718 451h1.6v1.4h-1.6zM601 443h1.6v1.4h-1.6zM719 454h1.6v1.4h-1.6zM751 479h1.6v1.4h-1.6zM786 442h1.6v1.4h-1.6zM592 479h1.6v1.4h-1.6zM700 442h1.6v1.4h-1.6zM727 444h1.6v1.4h-1.6zM627 446h1.6v1.4h-1.6zM690 458h1.6v1.4h-1.6zM591 462h1.6v1.4h-1.6zM712 450h1.6v1.4h-1.6zM723 467h1.6v1.4h-1.6zM577 450h1.6v1.4h-1.6zM724 460h1.6v1.4h-1.6zM717 442h1.6v1.4h-1.6zM785 466h1.6v1.4h-1.6zM626 448h1.6v1.4h-1.6zM785 443h1.6v1.4h-1.6zM665 496h1.6v1.4h-1.6zM773 443h1.6v1.4h-1.6zM736 446h1.6v1.4h-1.6zM721 464h1.6v1.4h-1.6zM603 443h1.6v1.4h-1.6zM622 444h1.6v1.4h-1.6zM583 441h1.6v1.4h-1.6zM664 448h1.6v1.4h-1.6zM592 454h1.6v1.4h-1.6zM782 454h1.6v1.4h-1.6zM653 460h1.6v1.4h-1.6zM671 442h1.6v1.4h-1.6zM681 439h1.6v1.4h-1.6zM723 442h1.6v1.4h-1.6zM656 496h1.6v1.4h-1.6zM743 470h1.6v1.4h-1.6zM716 456h1.6v1.4h-1.6zM730 498h1.6v1.4h-1.6zM618 464h1.6v1.4h-1.6zM641 444h1.6v1.4h-1.6zM755 455h1.6v1.4h-1.6zM761 475h1.6v1.4h-1.6zM704 442h1.6v1.4h-1.6zM578 452h1.6v1.4h-1.6zM734 444h1.6v1.4h-1.6zM590 438h1.6v1.4h-1.6zM613 459h1.6v1.4h-1.6zM576 443h1.6v1.4h-1.6zM633 460h1.6v1.4h-1.6zM792 439h1.6v1.4h-1.6zM600 487h1.6v1.4h-1.6zM788 441h1.6v1.4h-1.6zM649 451h1.6v1.4h-1.6zM645 448h1.6v1.4h-1.6zM680 444h1.6v1.4h-1.6zM587 440h1.6v1.4h-1.6zM611 440h1.6v1.4h-1.6zM712 460h1.6v1.4h-1.6zM633 466h1.6v1.4h-1.6zM735 446h1.6v1.4h-1.6zM683 442h1.6v1.4h-1.6zM779 453h1.6v1.4h-1.6zM586 441h1.6v1.4h-1.6zM727 447h1.6v1.4h-1.6zM732 443h1.6v1.4h-1.6zM750 467h1.6v1.4h-1.6zM596 454h1.6v1.4h-1.6zM617 460h1.6v1.4h-1.6zM751 466h1.6v1.4h-1.6zM626 440h1.6v1.4h-1.6zM721 453h1.6v1.4h-1.6zM605 442h1.6v1.4h-1.6zM703 440h1.6v1.4h-1.6zM714 443h1.6v1.4h-1.6zM632 448h1.6v1.4h-1.6zM692 461h1.6v1.4h-1.6zM582 461h1.6v1.4h-1.6zM624 444h1.6v1.4h-1.6zM715 459h1.6v1.4h-1.6zM710 479h1.6v1.4h-1.6zM620 445h1.6v1.4h-1.6zM720 444h1.6v1.4h-1.6zM610 443h1.6v1.4h-1.6zM744 469h1.6v1.4h-1.6zM732 495h1.6v1.4h-1.6zM749 445h1.6v1.4h-1.6zM644 461h1.6v1.4h-1.6zM587 455h1.6v1.4h-1.6zM595 439h1.6v1.4h-1.6zM688 441h1.6v1.4h-1.6zM780 476h1.6v1.4h-1.6zM676 442h1.6v1.4h-1.6zM601 451h1.6v1.4h-1.6zM689 446h1.6v1.4h-1.6zM732 452h1.6v1.4h-1.6zM745 440h1.6v1.4h-1.6zM590 447h1.6v1.4h-1.6zM681 444h1.6v1.4h-1.6zM722 443h1.6v1.4h-1.6zM645 450h1.6v1.4h-1.6zM731 464h1.6v1.4h-1.6zM657 449h1.6v1.4h-1.6zM779 486h1.6v1.4h-1.6zM711 440h1.6v1.4h-1.6zM675 456h1.6v1.4h-1.6zM636 439h1.6v1.4h-1.6zM790 481h1.6v1.4h-1.6zM603 449h1.6v1.4h-1.6zM711 445h1.6v1.4h-1.6zM590 463h1.6v1.4h-1.6zM744 449h1.6v1.4h-1.6zM594 447h1.6v1.4h-1.6zM596 497h1.6v1.4h-1.6zM586 444h1.6v1.4h-1.6zM744 441h1.6v1.4h-1.6zM598 440h1.6v1.4h-1.6zM611 452h1.6v1.4h-1.6zM758 442h1.6v1.4h-1.6zM613 464h1.6v1.4h-1.6zM668 446h1.6v1.4h-1.6zM602 443h1.6v1.4h-1.6zM788 441h1.6v1.4h-1.6zM632 462h1.6v1.4h-1.6zM771 480h1.6v1.4h-1.6zM679 494h1.6v1.4h-1.6zM708 444h1.6v1.4h-1.6zM677 461h1.6v1.4h-1.6zM736 441h1.6v1.4h-1.6zM618 495h1.6v1.4h-1.6zM598 468h1.6v1.4h-1.6zM649 443h1.6v1.4h-1.6zM631 450h1.6v1.4h-1.6zM792 441h1.6v1.4h-1.6zM763 445h1.6v1.4h-1.6zM613 463h1.6v1.4h-1.6zM650 442h1.6v1.4h-1.6zM667 469h1.6v1.4h-1.6zM764 454h1.6v1.4h-1.6zM577 464h1.6v1.4h-1.6zM708 479h1.6v1.4h-1.6zM784 445h1.6v1.4h-1.6zM761 469h1.6v1.4h-1.6zM633 446h1.6v1.4h-1.6zM657 446h1.6v1.4h-1.6zM658 440h1.6v1.4h-1.6zM625 481h1.6v1.4h-1.6zM665 456h1.6v1.4h-1.6zM770 463h1.6v1.4h-1.6zM629 483h1.6v1.4h-1.6zM752 521h1.6v1.4h-1.6zM735 463h1.6v1.4h-1.6zM753 444h1.6v1.4h-1.6zM719 447h1.6v1.4h-1.6zM759 441h1.6v1.4h-1.6zM693 446h1.6v1.4h-1.6zM755 446h1.6v1.4h-1.6zM760 472h1.6v1.4h-1.6zM768 441h1.6v1.4h-1.6zM781 463h1.6v1.4h-1.6zM724 457h1.6v1.4h-1.6zM586 475h1.6v1.4h-1.6zM695 449h1.6v1.4h-1.6zM649 465h1.6v1.4h-1.6zM747 474h1.6v1.4h-1.6zM622 446h1.6v1.4h-1.6zM630 440h1.6v1.4h-1.6zM647 439h1.6v1.4h-1.6zM750 443h1.6v1.4h-1.6zM591 440h1.6v1.4h-1.6zM738 442h1.6v1.4h-1.6zM676 447h1.6v1.4h-1.6zM751 493h1.6v1.4h-1.6zM643 456h1.6v1.4h-1.6zM771 469h1.6v1.4h-1.6zM772 503h1.6v1.4h-1.6zM643 539h1.6v1.4h-1.6zM701 444h1.6v1.4h-1.6zM704 524h1.6v1.4h-1.6zM689 471h1.6v1.4h-1.6zM666 542h1.6v1.4h-1.6zM721 450h1.6v1.4h-1.6zM655 460h1.6v1.4h-1.6zM785 496h1.6v1.4h-1.6zM602 558h1.6v1.4h-1.6zM583 482h1.6v1.4h-1.6zM670 500h1.6v1.4h-1.6zM669 443h1.6v1.4h-1.6zM690 522h1.6v1.4h-1.6zM748 460h1.6v1.4h-1.6zM624 505h1.6v1.4h-1.6zM751 450h1.6v1.4h-1.6zM670 462h1.6v1.4h-1.6zM731 568h1.6v1.4h-1.6zM619 456h1.6v1.4h-1.6zM647 503h1.6v1.4h-1.6zM616 477h1.6v1.4h-1.6zM685 492h1.6v1.4h-1.6zM606 591h1.6v1.4h-1.6zM794 478h1.6v1.4h-1.6zM750 448h1.6v1.4h-1.6zM775 477h1.6v1.4h-1.6zM742 537h1.6v1.4h-1.6zM654 564h1.6v1.4h-1.6zM621 440h1.6v1.4h-1.6zM685 550h1.6v1.4h-1.6zM773 589h1.6v1.4h-1.6zM687 570h1.6v1.4h-1.6zM698 446h1.6v1.4h-1.6zM714 518h1.6v1.4h-1.6zM668 483h1.6v1.4h-1.6zM632 454h1.6v1.4h-1.6zM667 473h1.6v1.4h-1.6zM678 443h1.6v1.4h-1.6zM576 459h1.6v1.4h-1.6zM732 506h1.6v1.4h-1.6zM627 453h1.6v1.4h-1.6zM688 448h1.6v1.4h-1.6zM707 553h1.6v1.4h-1.6zM619 481h1.6v1.4h-1.6zM733 506h1.6v1.4h-1.6zM731 499h1.6v1.4h-1.6zM635 527h1.6v1.4h-1.6zM778 441h1.6v1.4h-1.6zM782 467h1.6v1.4h-1.6zM594 442h1.6v1.4h-1.6zM750 493h1.6v1.4h-1.6zM606 468h1.6v1.4h-1.6zM649 509h1.6v1.4h-1.6zM629 449h1.6v1.4h-1.6zM610 464h1.6v1.4h-1.6zM711 456h1.6v1.4h-1.6zM611 450h1.6v1.4h-1.6zM594 449h1.6v1.4h-1.6zM644 473h1.6v1.4h-1.6zM615 470h1.6v1.4h-1.6zM672 614h1.6v1.4h-1.6zM682 579h1.6v1.4h-1.6zM678 449h1.6v1.4h-1.6zM705 446h1.6v1.4h-1.6zM612 442h1.6v1.4h-1.6zM729 604h1.6v1.4h-1.6zM664 460h1.6v1.4h-1.6zM668 460h1.6v1.4h-1.6zM727 463h1.6v1.4h-1.6zM608 536h1.6v1.4h-1.6zM701 439h1.6v1.4h-1.6zM761 502h1.6v1.4h-1.6zM653 487h1.6v1.4h-1.6zM777 463h1.6v1.4h-1.6zM670 456h1.6v1.4h-1.6zM697 491h1.6v1.4h-1.6zM736 584h1.6v1.4h-1.6zM607 461h1.6v1.4h-1.6zM762 515h1.6v1.4h-1.6zM705 493h1.6v1.4h-1.6zM650 579h1.6v1.4h-1.6zM696 463h1.6v1.4h-1.6zM615 444h1.6v1.4h-1.6zM772 517h1.6v1.4h-1.6zM581 457h1.6v1.4h-1.6zM680 472h1.6v1.4h-1.6zM655 548h1.6v1.4h-1.6zM652 475h1.6v1.4h-1.6zM779 488h1.6v1.4h-1.6zM680 458h1.6v1.4h-1.6zM660 484h1.6v1.4h-1.6zM748 453h1.6v1.4h-1.6zM656 462h1.6v1.4h-1.6zM655 557h1.6v1.4h-1.6zM693 454h1.6v1.4h-1.6zM648 522h1.6v1.4h-1.6zM610 495h1.6v1.4h-1.6zM580 449h1.6v1.4h-1.6zM588 518h1.6v1.4h-1.6zM607 451h1.6v1.4h-1.6zM588 453h1.6v1.4h-1.6zM736 500h1.6v1.4h-1.6zM775 581h1.6v1.4h-1.6zM696 563h1.6v1.4h-1.6zM595 565h1.6v1.4h-1.6zM670 449h1.6v1.4h-1.6zM739 534h1.6v1.4h-1.6zM660 443h1.6v1.4h-1.6zM767 507h1.6v1.4h-1.6zM706 622h1.6v1.4h-1.6zM583 441h1.6v1.4h-1.6zM602 439h1.6v1.4h-1.6zM730 487h1.6v1.4h-1.6zM600 447h1.6v1.4h-1.6zM615 484h1.6v1.4h-1.6zM723 608h1.6v1.4h-1.6zM654 626h1.6v1.4h-1.6zM670 463h1.6v1.4h-1.6zM631 451h1.6v1.4h-1.6zM730 448h1.6v1.4h-1.6zM614 446h1.6v1.4h-1.6zM652 503h1.6v1.4h-1.6zM588 475h1.6v1.4h-1.6zM724 440h1.6v1.4h-1.6zM671 515h1.6v1.4h-1.6zM701 468h1.6v1.4h-1.6zM768 483h1.6v1.4h-1.6zM649 463h1.6v1.4h-1.6zM782 534h1.6v1.4h-1.6zM776 478h1.6v1.4h-1.6zM606 448h1.6v1.4h-1.6zM659 496h1.6v1.4h-1.6zM576 517h1.6v1.4h-1.6zM748 474h1.6v1.4h-1.6zM576 516h1.6v1.4h-1.6zM666 492h1.6v1.4h-1.6zM700 502h1.6v1.4h-1.6zM665 595h1.6v1.4h-1.6zM785 567h1.6v1.4h-1.6zM710 457h1.6v1.4h-1.6zM658 454h1.6v1.4h-1.6zM773 515h1.6v1.4h-1.6zM748 522h1.6v1.4h-1.6zM792 495h1.6v1.4h-1.6zM645 507h1.6v1.4h-1.6zM633 484h1.6v1.4h-1.6zM610 533h1.6v1.4h-1.6zM682 454h1.6v1.4h-1.6zM778 443h1.6v1.4h-1.6zM779 507h1.6v1.4h-1.6zM608 508h1.6v1.4h-1.6zM701 554h1.6v1.4h-1.6zM704 466h1.6v1.4h-1.6zM780 443h1.6v1.4h-1.6zM746 444h1.6v1.4h-1.6zM636 444h1.6v1.4h-1.6zM766 467h1.6v1.4h-1.6zM734 453h1.6v1.4h-1.6zM735 489h1.6v1.4h-1.6zM596 472h1.6v1.4h-1.6zM733 450h1.6v1.4h-1.6zM719 454h1.6v1.4h-1.6zM656 561h1.6v1.4h-1.6zM669 480h1.6v1.4h-1.6zM752 508h1.6v1.4h-1.6zM675 535h1.6v1.4h-1.6zM663 584h1.6v1.4h-1.6zM679 445h1.6v1.4h-1.6zM739 446h1.6v1.4h-1.6zM724 441h1.6v1.4h-1.6zM792 476h1.6v1.4h-1.6zM738 445h1.6v1.4h-1.6zM715 461h1.6v1.4h-1.6zM630 520h1.6v1.4h-1.6zM582 470h1.6v1.4h-1.6zM594 531h1.6v1.4h-1.6zM771 440h1.6v1.4h-1.6zM677 469h1.6v1.4h-1.6zM733 502h1.6v1.4h-1.6zM650 570h1.6v1.4h-1.6zM616 446h1.6v1.4h-1.6zM754 445h1.6v1.4h-1.6zM616 472h1.6v1.4h-1.6zM649 447h1.6v1.4h-1.6zM779 470h1.6v1.4h-1.6zM747 452h1.6v1.4h-1.6zM775 451h1.6v1.4h-1.6zM774 485h1.6v1.4h-1.6zM788 510h1.6v1.4h-1.6zM713 475h1.6v1.4h-1.6zM763 467h1.6v1.4h-1.6zM597 558h1.6v1.4h-1.6zM752 494h1.6v1.4h-1.6zM738 451h1.6v1.4h-1.6zM677 523h1.6v1.4h-1.6zM786 563h1.6v1.4h-1.6zM610 494h1.6v1.4h-1.6zM697 464h1.6v1.4h-1.6zM612 446h1.6v1.4h-1.6zM678 471h1.6v1.4h-1.6zM634 461h1.6v1.4h-1.6zM697 508h1.6v1.4h-1.6zM704 447h1.6v1.4h-1.6zM769 461h1.6v1.4h-1.6zM786 633h1.6v1.4h-1.6zM606 481h1.6v1.4h-1.6zM787 462h1.6v1.4h-1.6zM695 457h1.6v1.4h-1.6zM581 450h1.6v1.4h-1.6zM602 455h1.6v1.4h-1.6zM713 479h1.6v1.4h-1.6zM783 495h1.6v1.4h-1.6zM655 584h1.6v1.4h-1.6zM714 477h1.6v1.4h-1.6zM764 561h1.6v1.4h-1.6zM654 541h1.6v1.4h-1.6zM589 439h1.6v1.4h-1.6zM696 464h1.6v1.4h-1.6zM686 452h1.6v1.4h-1.6zM759 561h1.6v1.4h-1.6zM793 564h1.6v1.4h-1.6zM732 439h1.6v1.4h-1.6zM586 500h1.6v1.4h-1.6zM788 480h1.6v1.4h-1.6zM700 439h1.6v1.4h-1.6zM704 631h1.6v1.4h-1.6zM578 463h1.6v1.4h-1.6zM614 636h1.6v1.4h-1.6zM634 673h1.6v1.4h-1.6zM688 482h1.6v1.4h-1.6zM787 496h1.6v1.4h-1.6zM728 446h1.6v1.4h-1.6zM599 590h1.6v1.4h-1.6zM634 456h1.6v1.4h-1.6zM655 558h1.6v1.4h-1.6zM793 546h1.6v1.4h-1.6zM718 458h1.6v1.4h-1.6zM734 527h1.6v1.4h-1.6zM631 455h1.6v1.4h-1.6zM610 456h1.6v1.4h-1.6zM704 617h1.6v1.4h-1.6zM610 516h1.6v1.4h-1.6zM701 529h1.6v1.4h-1.6zM666 525h1.6v1.4h-1.6zM578 445h1.6v1.4h-1.6zM668 468h1.6v1.4h-1.6zM741 469h1.6v1.4h-1.6zM756 469h1.6v1.4h-1.6zM595 510h1.6v1.4h-1.6zM660 484h1.6v1.4h-1.6zM743 466h1.6v1.4h-1.6zM722 637h1.6v1.4h-1.6zM674 516h1.6v1.4h-1.6zM778 541h1.6v1.4h-1.6zM615 446h1.6v1.4h-1.6zM593 483h1.6v1.4h-1.6zM595 554h1.6v1.4h-1.6zM668 479h1.6v1.4h-1.6zM629 457h1.6v1.4h-1.6zM642 482h1.6v1.4h-1.6zM775 574h1.6v1.4h-1.6zM669 458h1.6v1.4h-1.6zM585 453h1.6v1.4h-1.6zM761 554h1.6v1.4h-1.6zM609 547h1.6v1.4h-1.6zM588 431h1.6v1.4h-1.6zM649 437h1.6v1.4h-1.6zM738 424h1.6v1.4h-1.6zM687 436h1.6v1.4h-1.6zM722 432h1.6v1.4h-1.6zM720 437h1.6v1.4h-1.6zM773 438h1.6v1.4h-1.6zM624 433h1.6v1.4h-1.6zM619 437h1.6v1.4h-1.6zM726 382h1.6v1.4h-1.6zM649 435h1.6v1.4h-1.6zM722 436h1.6v1.4h-1.6zM663 426h1.6v1.4h-1.6zM670 437h1.6v1.4h-1.6zM590 430h1.6v1.4h-1.6zM792 410h1.6v1.4h-1.6zM597 431h1.6v1.4h-1.6zM682 436h1.6v1.4h-1.6zM722 431h1.6v1.4h-1.6zM753 435h1.6v1.4h-1.6zM780 420h1.6v1.4h-1.6zM679 437h1.6v1.4h-1.6zM681 437h1.6v1.4h-1.6zM726 425h1.6v1.4h-1.6zM702 397h1.6v1.4h-1.6zM967 425h1.6v1.4h-1.6zM1004 437h1.6v1.4h-1.6zM981 438h1.6v1.4h-1.6zM994 424h1.6v1.4h-1.6zM982 425h1.6v1.4h-1.6zM983 425h1.6v1.4h-1.6zM979 396h1.6v1.4h-1.6zM987 438h1.6v1.4h-1.6zM970 424h1.6v1.4h-1.6zM1007 427h1.6v1.4h-1.6zM973 416h1.6v1.4h-1.6zM1000 437h1.6v1.4h-1.6zM984 426h1.6v1.4h-1.6zM965 438h1.6v1.4h-1.6zM982 415h1.6v1.4h-1.6zM1014 434h1.6v1.4h-1.6zM1010 421h1.6v1.4h-1.6zM1007 429h1.6v1.4h-1.6zM1013 427h1.6v1.4h-1.6zM1011 429h1.6v1.4h-1.6zM975 430h1.6v1.4h-1.6zM989 434h1.6v1.4h-1.6zM983 430h1.6v1.4h-1.6zM994 436h1.6v1.4h-1.6zM979 431h1.6v1.4h-1.6zM990 432h1.6v1.4h-1.6zM998 436h1.6v1.4h-1.6zM991 435h1.6v1.4h-1.6zM1003 425h1.6v1.4h-1.6zM1003 430h1.6v1.4h-1.6zM992 352h1.6v1.4h-1.6zM1000 423h1.6v1.4h-1.6zM993 421h1.6v1.4h-1.6zM1005 382h1.6v1.4h-1.6zM999 395h1.6v1.4h-1.6zM991 418h1.6v1.4h-1.6zM995 426h1.6v1.4h-1.6zM995 392h1.6v1.4h-1.6zM1006 431h1.6v1.4h-1.6zM992 387h1.6v1.4h-1.6zM1004 401h1.6v1.4h-1.6zM1003 399h1.6v1.4h-1.6zM993 436h1.6v1.4h-1.6zM995 437h1.6v1.4h-1.6zM841 452h1.6v1.4h-1.6zM827 499h1.6v1.4h-1.6zM834 443h1.6v1.4h-1.6zM811 440h1.6v1.4h-1.6zM833 462h1.6v1.4h-1.6zM818 447h1.6v1.4h-1.6zM808 450h1.6v1.4h-1.6zM829 478h1.6v1.4h-1.6zM836 474h1.6v1.4h-1.6zM816 448h1.6v1.4h-1.6zM810 503h1.6v1.4h-1.6zM803 441h1.6v1.4h-1.6z" fill="#48483a" fill-opacity="0.45"/>
<path d="M420 439h1.4v1.2h-1.4zM200 439h1.4v1.2h-1.4zM607 438h1.4v1.2h-1.4zM582 438h1.4v1.2h-1.4zM169 438h1.4v1.2h-1.4zM216 438h1.4v1.2h-1.4zM509 438h1.4v1.2h-1.4zM332 438h1.4v1.2h-1.4zM687 439h1.4v1.2h-1.4zM484 438h1.4v1.2h-1.4zM993 439h1.4v1.2h-1.4zM390 438h1.4v1.2h-1.4zM263 438h1.4v1.2h-1.4zM853 438h1.4v1.2h-1.4zM295 438h1.4v1.2h-1.4zM463 438h1.4v1.2h-1.4zM617 438h1.4v1.2h-1.4zM317 438h1.4v1.2h-1.4zM733 438h1.4v1.2h-1.4zM650 438h1.4v1.2h-1.4zM534 438h1.4v1.2h-1.4zM750 439h1.4v1.2h-1.4zM350 438h1.4v1.2h-1.4zM904 438h1.4v1.2h-1.4zM776 438h1.4v1.2h-1.4zM240 439h1.4v1.2h-1.4zM503 438h1.4v1.2h-1.4zM565 438h1.4v1.2h-1.4zM170 438h1.4v1.2h-1.4zM639 438h1.4v1.2h-1.4zM905 438h1.4v1.2h-1.4zM658 439h1.4v1.2h-1.4zM645 437h1.4v1.2h-1.4zM965 438h1.4v1.2h-1.4zM552 438h1.4v1.2h-1.4zM752 438h1.4v1.2h-1.4zM704 439h1.4v1.2h-1.4zM386 438h1.4v1.2h-1.4zM475 438h1.4v1.2h-1.4zM541 438h1.4v1.2h-1.4zM284 438h1.4v1.2h-1.4zM811 438h1.4v1.2h-1.4zM250 438h1.4v1.2h-1.4zM901 439h1.4v1.2h-1.4zM207 438h1.4v1.2h-1.4zM912 438h1.4v1.2h-1.4zM855 438h1.4v1.2h-1.4zM501 438h1.4v1.2h-1.4zM451 439h1.4v1.2h-1.4zM269 438h1.4v1.2h-1.4zM291 438h1.4v1.2h-1.4zM562 438h1.4v1.2h-1.4zM653 438h1.4v1.2h-1.4zM504 438h1.4v1.2h-1.4zM460 437h1.4v1.2h-1.4zM742 438h1.4v1.2h-1.4zM589 438h1.4v1.2h-1.4zM183 438h1.4v1.2h-1.4zM926 438h1.4v1.2h-1.4zM837 437h1.4v1.2h-1.4zM481 438h1.4v1.2h-1.4zM693 438h1.4v1.2h-1.4zM191 438h1.4v1.2h-1.4zM279 438h1.4v1.2h-1.4zM435 438h1.4v1.2h-1.4zM269 438h1.4v1.2h-1.4zM225 438h1.4v1.2h-1.4zM904 438h1.4v1.2h-1.4zM675 438h1.4v1.2h-1.4zM441 438h1.4v1.2h-1.4zM456 439h1.4v1.2h-1.4zM1008 439h1.4v1.2h-1.4zM545 438h1.4v1.2h-1.4zM226 438h1.4v1.2h-1.4zM437 438h1.4v1.2h-1.4zM278 439h1.4v1.2h-1.4zM156 439h1.4v1.2h-1.4zM265 438h1.4v1.2h-1.4zM613 439h1.4v1.2h-1.4zM995 438h1.4v1.2h-1.4zM894 438h1.4v1.2h-1.4zM458 438h1.4v1.2h-1.4zM283 438h1.4v1.2h-1.4zM820 438h1.4v1.2h-1.4zM425 438h1.4v1.2h-1.4zM1001 439h1.4v1.2h-1.4zM885 438h1.4v1.2h-1.4zM786 438h1.4v1.2h-1.4zM335 438h1.4v1.2h-1.4zM161 438h1.4v1.2h-1.4zM161 438h1.4v1.2h-1.4zM744 439h1.4v1.2h-1.4zM976 437h1.4v1.2h-1.4zM1003 439h1.4v1.2h-1.4zM974 438h1.4v1.2h-1.4zM335 438h1.4v1.2h-1.4zM309 438h1.4v1.2h-1.4zM926 439h1.4v1.2h-1.4zM874 438h1.4v1.2h-1.4zM838 438h1.4v1.2h-1.4zM210 438h1.4v1.2h-1.4zM823 437h1.4v1.2h-1.4zM795 438h1.4v1.2h-1.4zM829 438h1.4v1.2h-1.4zM428 439h1.4v1.2h-1.4zM484 437h1.4v1.2h-1.4zM488 439h1.4v1.2h-1.4zM285 438h1.4v1.2h-1.4zM248 439h1.4v1.2h-1.4zM844 439h1.4v1.2h-1.4zM264 439h1.4v1.2h-1.4zM713 437h1.4v1.2h-1.4zM444 438h1.4v1.2h-1.4zM149 438h1.4v1.2h-1.4zM988 438h1.4v1.2h-1.4zM956 438h1.4v1.2h-1.4zM517 439h1.4v1.2h-1.4zM321 438h1.4v1.2h-1.4zM357 438h1.4v1.2h-1.4zM651 438h1.4v1.2h-1.4zM364 438h1.4v1.2h-1.4zM935 438h1.4v1.2h-1.4zM447 438h1.4v1.2h-1.4zM930 438h1.4v1.2h-1.4zM505 439h1.4v1.2h-1.4zM603 438h1.4v1.2h-1.4zM596 439h1.4v1.2h-1.4zM297 438h1.4v1.2h-1.4zM139 438h1.4v1.2h-1.4zM552 438h1.4v1.2h-1.4zM773 438h1.4v1.2h-1.4zM591 438h1.4v1.2h-1.4zM624 438h1.4v1.2h-1.4zM628 438h1.4v1.2h-1.4zM354 438h1.4v1.2h-1.4zM582 439h1.4v1.2h-1.4zM629 438h1.4v1.2h-1.4zM525 437h1.4v1.2h-1.4zM674 438h1.4v1.2h-1.4zM744 438h1.4v1.2h-1.4zM533 438h1.4v1.2h-1.4zM963 438h1.4v1.2h-1.4zM750 439h1.4v1.2h-1.4zM364 438h1.4v1.2h-1.4zM627 439h1.4v1.2h-1.4zM256 438h1.4v1.2h-1.4zM243 438h1.4v1.2h-1.4zM347 438h1.4v1.2h-1.4zM200 438h1.4v1.2h-1.4zM924 438h1.4v1.2h-1.4zM272 438h1.4v1.2h-1.4zM262 438h1.4v1.2h-1.4zM911 438h1.4v1.2h-1.4zM972 438h1.4v1.2h-1.4zM486 437h1.4v1.2h-1.4zM867 438h1.4v1.2h-1.4zM278 438h1.4v1.2h-1.4zM434 438h1.4v1.2h-1.4zM308 438h1.4v1.2h-1.4zM153 439h1.4v1.2h-1.4zM622 438h1.4v1.2h-1.4zM427 438h1.4v1.2h-1.4zM684 438h1.4v1.2h-1.4zM1001 438h1.4v1.2h-1.4zM828 438h1.4v1.2h-1.4zM369 438h1.4v1.2h-1.4zM171 438h1.4v1.2h-1.4zM250 438h1.4v1.2h-1.4zM507 439h1.4v1.2h-1.4zM363 438h1.4v1.2h-1.4zM267 439h1.4v1.2h-1.4zM751 438h1.4v1.2h-1.4zM215 439h1.4v1.2h-1.4zM509 438h1.4v1.2h-1.4zM200 439h1.4v1.2h-1.4zM840 438h1.4v1.2h-1.4zM210 438h1.4v1.2h-1.4zM894 438h1.4v1.2h-1.4zM534 438h1.4v1.2h-1.4zM950 439h1.4v1.2h-1.4zM371 439h1.4v1.2h-1.4zM345 439h1.4v1.2h-1.4zM232 438h1.4v1.2h-1.4zM313 438h1.4v1.2h-1.4zM410 438h1.4v1.2h-1.4zM391 439h1.4v1.2h-1.4zM575 438h1.4v1.2h-1.4zM152 439h1.4v1.2h-1.4zM356 439h1.4v1.2h-1.4zM620 438h1.4v1.2h-1.4zM302 437h1.4v1.2h-1.4zM229 438h1.4v1.2h-1.4zM855 438h1.4v1.2h-1.4zM869 438h1.4v1.2h-1.4zM481 438h1.4v1.2h-1.4zM999 438h1.4v1.2h-1.4zM437 439h1.4v1.2h-1.4zM694 438h1.4v1.2h-1.4zM491 438h1.4v1.2h-1.4zM250 438h1.4v1.2h-1.4zM198 438h1.4v1.2h-1.4zM279 438h1.4v1.2h-1.4zM210 439h1.4v1.2h-1.4zM725 438h1.4v1.2h-1.4zM384 438h1.4v1.2h-1.4zM539 439h1.4v1.2h-1.4zM274 438h1.4v1.2h-1.4zM980 438h1.4v1.2h-1.4zM990 438h1.4v1.2h-1.4zM984 438h1.4v1.2h-1.4zM408 438h1.4v1.2h-1.4zM471 438h1.4v1.2h-1.4zM553 438h1.4v1.2h-1.4zM579 438h1.4v1.2h-1.4zM140 438h1.4v1.2h-1.4zM487 438h1.4v1.2h-1.4zM173 439h1.4v1.2h-1.4zM340 438h1.4v1.2h-1.4zM650 438h1.4v1.2h-1.4zM713 438h1.4v1.2h-1.4zM765 438h1.4v1.2h-1.4zM422 438h1.4v1.2h-1.4zM1001 439h1.4v1.2h-1.4zM701 439h1.4v1.2h-1.4zM174 439h1.4v1.2h-1.4zM687 437h1.4v1.2h-1.4zM780 438h1.4v1.2h-1.4zM596 438h1.4v1.2h-1.4zM579 439h1.4v1.2h-1.4zM862 438h1.4v1.2h-1.4zM649 439h1.4v1.2h-1.4zM745 438h1.4v1.2h-1.4zM338 438h1.4v1.2h-1.4zM453 438h1.4v1.2h-1.4zM228 438h1.4v1.2h-1.4zM687 438h1.4v1.2h-1.4zM686 438h1.4v1.2h-1.4zM139 438h1.4v1.2h-1.4zM836 438h1.4v1.2h-1.4zM606 438h1.4v1.2h-1.4zM715 439h1.4v1.2h-1.4zM357 438h1.4v1.2h-1.4zM201 438h1.4v1.2h-1.4zM316 439h1.4v1.2h-1.4zM786 439h1.4v1.2h-1.4zM472 438h1.4v1.2h-1.4zM557 438h1.4v1.2h-1.4zM678 438h1.4v1.2h-1.4zM700 438h1.4v1.2h-1.4zM359 438h1.4v1.2h-1.4zM789 438h1.4v1.2h-1.4zM147 439h1.4v1.2h-1.4zM189 438h1.4v1.2h-1.4zM744 439h1.4v1.2h-1.4zM729 438h1.4v1.2h-1.4zM544 439h1.4v1.2h-1.4zM545 439h1.4v1.2h-1.4zM311 439h1.4v1.2h-1.4zM995 438h1.4v1.2h-1.4zM539 438h1.4v1.2h-1.4zM856 439h1.4v1.2h-1.4zM372 438h1.4v1.2h-1.4zM320 438h1.4v1.2h-1.4zM647 438h1.4v1.2h-1.4zM260 437h1.4v1.2h-1.4zM252 438h1.4v1.2h-1.4zM856 437h1.4v1.2h-1.4zM754 438h1.4v1.2h-1.4zM339 439h1.4v1.2h-1.4zM158 438h1.4v1.2h-1.4zM139 438h1.4v1.2h-1.4zM401 438h1.4v1.2h-1.4zM260 438h1.4v1.2h-1.4zM874 438h1.4v1.2h-1.4zM138 438h1.4v1.2h-1.4zM241 437h1.4v1.2h-1.4zM949 438h1.4v1.2h-1.4zM390 437h1.4v1.2h-1.4zM463 437h1.4v1.2h-1.4zM653 439h1.4v1.2h-1.4zM453 438h1.4v1.2h-1.4zM178 438h1.4v1.2h-1.4zM225 438h1.4v1.2h-1.4zM957 438h1.4v1.2h-1.4zM355 438h1.4v1.2h-1.4zM303 439h1.4v1.2h-1.4zM464 439h1.4v1.2h-1.4zM849 438h1.4v1.2h-1.4zM690 439h1.4v1.2h-1.4zM618 438h1.4v1.2h-1.4zM768 439h1.4v1.2h-1.4zM532 438h1.4v1.2h-1.4zM797 438h1.4v1.2h-1.4zM179 438h1.4v1.2h-1.4zM950 439h1.4v1.2h-1.4zM438 439h1.4v1.2h-1.4zM397 438h1.4v1.2h-1.4zM364 437h1.4v1.2h-1.4zM712 438h1.4v1.2h-1.4zM482 439h1.4v1.2h-1.4zM283 438h1.4v1.2h-1.4zM931 438h1.4v1.2h-1.4zM572 438h1.4v1.2h-1.4zM1011 439h1.4v1.2h-1.4zM531 438h1.4v1.2h-1.4zM216 438h1.4v1.2h-1.4zM436 438h1.4v1.2h-1.4zM363 438h1.4v1.2h-1.4zM636 439h1.4v1.2h-1.4zM498 438h1.4v1.2h-1.4zM499 438h1.4v1.2h-1.4zM433 438h1.4v1.2h-1.4zM190 438h1.4v1.2h-1.4zM247 439h1.4v1.2h-1.4zM578 438h1.4v1.2h-1.4zM326 438h1.4v1.2h-1.4zM374 438h1.4v1.2h-1.4zM527 439h1.4v1.2h-1.4zM974 439h1.4v1.2h-1.4zM155 438h1.4v1.2h-1.4zM164 438h1.4v1.2h-1.4zM552 437h1.4v1.2h-1.4zM652 439h1.4v1.2h-1.4zM950 438h1.4v1.2h-1.4zM861 439h1.4v1.2h-1.4zM354 437h1.4v1.2h-1.4zM232 438h1.4v1.2h-1.4zM735 439h1.4v1.2h-1.4zM963 438h1.4v1.2h-1.4zM807 438h1.4v1.2h-1.4zM538 438h1.4v1.2h-1.4zM823 438h1.4v1.2h-1.4zM340 439h1.4v1.2h-1.4zM403 438h1.4v1.2h-1.4zM248 438h1.4v1.2h-1.4zM749 439h1.4v1.2h-1.4zM234 439h1.4v1.2h-1.4zM648 438h1.4v1.2h-1.4zM477 438h1.4v1.2h-1.4zM145 439h1.4v1.2h-1.4zM401 437h1.4v1.2h-1.4zM702 438h1.4v1.2h-1.4zM912 438h1.4v1.2h-1.4zM353 438h1.4v1.2h-1.4zM979 438h1.4v1.2h-1.4zM155 438h1.4v1.2h-1.4zM574 438h1.4v1.2h-1.4zM362 438h1.4v1.2h-1.4zM722 438h1.4v1.2h-1.4zM166 438h1.4v1.2h-1.4zM433 438h1.4v1.2h-1.4zM310 438h1.4v1.2h-1.4zM836 438h1.4v1.2h-1.4zM316 438h1.4v1.2h-1.4zM988 438h1.4v1.2h-1.4zM339 439h1.4v1.2h-1.4zM330 438h1.4v1.2h-1.4zM972 438h1.4v1.2h-1.4zM571 438h1.4v1.2h-1.4zM502 438h1.4v1.2h-1.4zM720 438h1.4v1.2h-1.4zM481 438h1.4v1.2h-1.4zM323 438h1.4v1.2h-1.4zM182 438h1.4v1.2h-1.4zM189 438h1.4v1.2h-1.4zM912 439h1.4v1.2h-1.4zM779 439h1.4v1.2h-1.4zM425 438h1.4v1.2h-1.4zM299 439h1.4v1.2h-1.4zM164 438h1.4v1.2h-1.4zM719 438h1.4v1.2h-1.4zM427 438h1.4v1.2h-1.4zM285 439h1.4v1.2h-1.4zM445 438h1.4v1.2h-1.4zM975 439h1.4v1.2h-1.4zM318 439h1.4v1.2h-1.4zM449 439h1.4v1.2h-1.4zM516 438h1.4v1.2h-1.4zM179 438h1.4v1.2h-1.4zM943 438h1.4v1.2h-1.4zM305 438h1.4v1.2h-1.4zM163 439h1.4v1.2h-1.4zM497 438h1.4v1.2h-1.4zM172 438h1.4v1.2h-1.4zM167 439h1.4v1.2h-1.4zM362 439h1.4v1.2h-1.4zM792 438h1.4v1.2h-1.4zM375 438h1.4v1.2h-1.4zM977 438h1.4v1.2h-1.4zM765 438h1.4v1.2h-1.4zM414 438h1.4v1.2h-1.4zM799 438h1.4v1.2h-1.4zM941 438h1.4v1.2h-1.4zM157 437h1.4v1.2h-1.4zM341 437h1.4v1.2h-1.4zM974 438h1.4v1.2h-1.4zM475 438h1.4v1.2h-1.4zM569 439h1.4v1.2h-1.4zM951 438h1.4v1.2h-1.4zM784 439h1.4v1.2h-1.4zM858 438h1.4v1.2h-1.4zM424 438h1.4v1.2h-1.4zM417 438h1.4v1.2h-1.4zM205 439h1.4v1.2h-1.4zM309 438h1.4v1.2h-1.4zM193 438h1.4v1.2h-1.4zM166 438h1.4v1.2h-1.4zM997 438h1.4v1.2h-1.4zM912 439h1.4v1.2h-1.4zM210 438h1.4v1.2h-1.4zM221 438h1.4v1.2h-1.4zM528 438h1.4v1.2h-1.4zM342 438h1.4v1.2h-1.4zM728 438h1.4v1.2h-1.4zM793 439h1.4v1.2h-1.4zM242 438h1.4v1.2h-1.4zM874 438h1.4v1.2h-1.4zM463 439h1.4v1.2h-1.4zM784 438h1.4v1.2h-1.4zM351 438h1.4v1.2h-1.4zM271 439h1.4v1.2h-1.4zM423 438h1.4v1.2h-1.4zM484 439h1.4v1.2h-1.4zM339 438h1.4v1.2h-1.4zM846 437h1.4v1.2h-1.4zM226 437h1.4v1.2h-1.4zM553 439h1.4v1.2h-1.4zM939 438h1.4v1.2h-1.4zM171 438h1.4v1.2h-1.4zM302 438h1.4v1.2h-1.4zM990 437h1.4v1.2h-1.4zM463 438h1.4v1.2h-1.4zM896 438h1.4v1.2h-1.4zM819 438h1.4v1.2h-1.4zM966 439h1.4v1.2h-1.4zM680 439h1.4v1.2h-1.4zM327 438h1.4v1.2h-1.4zM315 438h1.4v1.2h-1.4zM360 438h1.4v1.2h-1.4zM315 438h1.4v1.2h-1.4zM146 438h1.4v1.2h-1.4zM299 439h1.4v1.2h-1.4zM410 438h1.4v1.2h-1.4zM617 439h1.4v1.2h-1.4zM192 439h1.4v1.2h-1.4zM619 438h1.4v1.2h-1.4zM697 438h1.4v1.2h-1.4zM747 438h1.4v1.2h-1.4zM496 438h1.4v1.2h-1.4zM973 439h1.4v1.2h-1.4zM410 438h1.4v1.2h-1.4zM502 438h1.4v1.2h-1.4zM895 439h1.4v1.2h-1.4zM309 438h1.4v1.2h-1.4zM775 438h1.4v1.2h-1.4zM928 438h1.4v1.2h-1.4zM508 438h1.4v1.2h-1.4zM911 438h1.4v1.2h-1.4zM541 438h1.4v1.2h-1.4zM620 438h1.4v1.2h-1.4zM699 438h1.4v1.2h-1.4zM682 438h1.4v1.2h-1.4zM462 438h1.4v1.2h-1.4zM385 438h1.4v1.2h-1.4zM594 438h1.4v1.2h-1.4zM567 438h1.4v1.2h-1.4zM843 438h1.4v1.2h-1.4zM247 438h1.4v1.2h-1.4zM964 439h1.4v1.2h-1.4zM183 438h1.4v1.2h-1.4zM949 438h1.4v1.2h-1.4zM681 439h1.4v1.2h-1.4zM860 439h1.4v1.2h-1.4zM331 439h1.4v1.2h-1.4zM491 439h1.4v1.2h-1.4zM297 438h1.4v1.2h-1.4zM328 438h1.4v1.2h-1.4zM473 438h1.4v1.2h-1.4zM244 438h1.4v1.2h-1.4zM924 439h1.4v1.2h-1.4zM172 438h1.4v1.2h-1.4zM169 438h1.4v1.2h-1.4zM872 439h1.4v1.2h-1.4zM619 439h1.4v1.2h-1.4zM687 438h1.4v1.2h-1.4zM648 439h1.4v1.2h-1.4zM510 438h1.4v1.2h-1.4zM521 438h1.4v1.2h-1.4zM157 438h1.4v1.2h-1.4zM343 438h1.4v1.2h-1.4zM806 438h1.4v1.2h-1.4zM294 438h1.4v1.2h-1.4zM551 438h1.4v1.2h-1.4zM514 438h1.4v1.2h-1.4zM217 438h1.4v1.2h-1.4zM172 438h1.4v1.2h-1.4zM695 439h1.4v1.2h-1.4zM819 439h1.4v1.2h-1.4zM585 439h1.4v1.2h-1.4zM468 438h1.4v1.2h-1.4zM971 439h1.4v1.2h-1.4zM1011 439h1.4v1.2h-1.4zM779 438h1.4v1.2h-1.4zM998 438h1.4v1.2h-1.4zM568 439h1.4v1.2h-1.4zM281 438h1.4v1.2h-1.4zM828 438h1.4v1.2h-1.4zM444 438h1.4v1.2h-1.4zM800 439h1.4v1.2h-1.4zM377 439h1.4v1.2h-1.4zM852 438h1.4v1.2h-1.4zM944 439h1.4v1.2h-1.4zM319 438h1.4v1.2h-1.4zM416 439h1.4v1.2h-1.4zM168 438h1.4v1.2h-1.4zM958 438h1.4v1.2h-1.4zM733 438h1.4v1.2h-1.4zM825 438h1.4v1.2h-1.4zM237 438h1.4v1.2h-1.4zM452 438h1.4v1.2h-1.4zM902 438h1.4v1.2h-1.4zM911 438h1.4v1.2h-1.4zM228 439h1.4v1.2h-1.4zM482 438h1.4v1.2h-1.4zM836 438h1.4v1.2h-1.4zM643 439h1.4v1.2h-1.4zM452 438h1.4v1.2h-1.4zM291 438h1.4v1.2h-1.4zM789 439h1.4v1.2h-1.4zM359 438h1.4v1.2h-1.4zM697 439h1.4v1.2h-1.4zM719 438h1.4v1.2h-1.4zM411 438h1.4v1.2h-1.4zM267 438h1.4v1.2h-1.4zM677 438h1.4v1.2h-1.4zM922 438h1.4v1.2h-1.4zM252 438h1.4v1.2h-1.4zM156 439h1.4v1.2h-1.4zM138 438h1.4v1.2h-1.4zM450 438h1.4v1.2h-1.4zM333 438h1.4v1.2h-1.4zM315 438h1.4v1.2h-1.4zM684 438h1.4v1.2h-1.4zM958 438h1.4v1.2h-1.4zM350 438h1.4v1.2h-1.4zM696 438h1.4v1.2h-1.4zM901 438h1.4v1.2h-1.4zM368 438h1.4v1.2h-1.4zM146 438h1.4v1.2h-1.4zM444 438h1.4v1.2h-1.4zM703 437h1.4v1.2h-1.4zM780 439h1.4v1.2h-1.4zM354 438h1.4v1.2h-1.4zM603 438h1.4v1.2h-1.4zM492 438h1.4v1.2h-1.4zM820 438h1.4v1.2h-1.4zM147 437h1.4v1.2h-1.4zM261 438h1.4v1.2h-1.4zM311 438h1.4v1.2h-1.4zM699 438h1.4v1.2h-1.4zM850 438h1.4v1.2h-1.4zM400 439h1.4v1.2h-1.4zM179 439h1.4v1.2h-1.4zM764 438h1.4v1.2h-1.4zM142 439h1.4v1.2h-1.4zM545 438h1.4v1.2h-1.4zM787 438h1.4v1.2h-1.4zM228 438h1.4v1.2h-1.4zM340 439h1.4v1.2h-1.4zM794 438h1.4v1.2h-1.4zM746 439h1.4v1.2h-1.4zM370 438h1.4v1.2h-1.4zM622 438h1.4v1.2h-1.4zM595 438h1.4v1.2h-1.4zM369 438h1.4v1.2h-1.4zM327 437h1.4v1.2h-1.4zM909 439h1.4v1.2h-1.4zM343 438h1.4v1.2h-1.4zM789 439h1.4v1.2h-1.4zM423 438h1.4v1.2h-1.4zM909 438h1.4v1.2h-1.4zM933 438h1.4v1.2h-1.4zM690 438h1.4v1.2h-1.4zM996 438h1.4v1.2h-1.4zM548 439h1.4v1.2h-1.4zM889 438h1.4v1.2h-1.4zM520 438h1.4v1.2h-1.4zM406 438h1.4v1.2h-1.4zM322 438h1.4v1.2h-1.4zM936 438h1.4v1.2h-1.4zM263 438h1.4v1.2h-1.4zM952 438h1.4v1.2h-1.4zM439 438h1.4v1.2h-1.4zM173 438h1.4v1.2h-1.4zM744 438h1.4v1.2h-1.4zM783 438h1.4v1.2h-1.4zM194 438h1.4v1.2h-1.4zM854 438h1.4v1.2h-1.4zM856 438h1.4v1.2h-1.4zM898 438h1.4v1.2h-1.4zM939 438h1.4v1.2h-1.4zM317 438h1.4v1.2h-1.4zM234 439h1.4v1.2h-1.4zM849 438h1.4v1.2h-1.4zM693 438h1.4v1.2h-1.4zM388 438h1.4v1.2h-1.4zM224 439h1.4v1.2h-1.4zM316 439h1.4v1.2h-1.4zM416 438h1.4v1.2h-1.4zM361 438h1.4v1.2h-1.4zM384 438h1.4v1.2h-1.4zM418 438h1.4v1.2h-1.4zM982 437h1.4v1.2h-1.4zM679 438h1.4v1.2h-1.4zM163 438h1.4v1.2h-1.4zM815 438h1.4v1.2h-1.4zM440 438h1.4v1.2h-1.4zM326 438h1.4v1.2h-1.4zM893 439h1.4v1.2h-1.4zM286 439h1.4v1.2h-1.4zM137 438h1.4v1.2h-1.4zM995 439h1.4v1.2h-1.4zM140 438h1.4v1.2h-1.4zM836 438h1.4v1.2h-1.4zM298 438h1.4v1.2h-1.4zM866 438h1.4v1.2h-1.4zM365 439h1.4v1.2h-1.4zM325 438h1.4v1.2h-1.4zM750 438h1.4v1.2h-1.4zM695 438h1.4v1.2h-1.4zM207 438h1.4v1.2h-1.4zM827 438h1.4v1.2h-1.4zM687 438h1.4v1.2h-1.4zM482 439h1.4v1.2h-1.4zM918 439h1.4v1.2h-1.4zM158 439h1.4v1.2h-1.4zM317 438h1.4v1.2h-1.4zM576 439h1.4v1.2h-1.4zM469 438h1.4v1.2h-1.4zM541 438h1.4v1.2h-1.4zM603 438h1.4v1.2h-1.4zM703 438h1.4v1.2h-1.4zM442 438h1.4v1.2h-1.4zM876 438h1.4v1.2h-1.4zM717 438h1.4v1.2h-1.4zM521 438h1.4v1.2h-1.4zM815 438h1.4v1.2h-1.4zM542 438h1.4v1.2h-1.4zM913 438h1.4v1.2h-1.4zM401 438h1.4v1.2h-1.4zM753 438h1.4v1.2h-1.4zM273 438h1.4v1.2h-1.4zM353 438h1.4v1.2h-1.4zM277 439h1.4v1.2h-1.4zM424 439h1.4v1.2h-1.4zM776 439h1.4v1.2h-1.4zM225 438h1.4v1.2h-1.4zM473 438h1.4v1.2h-1.4zM1000 438h1.4v1.2h-1.4zM518 438h1.4v1.2h-1.4zM308 438h1.4v1.2h-1.4zM317 438h1.4v1.2h-1.4zM477 439h1.4v1.2h-1.4zM831 438h1.4v1.2h-1.4zM745 438h1.4v1.2h-1.4zM543 438h1.4v1.2h-1.4zM261 438h1.4v1.2h-1.4zM787 438h1.4v1.2h-1.4zM933 438h1.4v1.2h-1.4zM794 438h1.4v1.2h-1.4zM506 438h1.4v1.2h-1.4zM909 439h1.4v1.2h-1.4zM816 438h1.4v1.2h-1.4zM733 437h1.4v1.2h-1.4zM699 438h1.4v1.2h-1.4zM688 438h1.4v1.2h-1.4zM222 438h1.4v1.2h-1.4zM762 439h1.4v1.2h-1.4zM689 438h1.4v1.2h-1.4zM536 439h1.4v1.2h-1.4zM682 438h1.4v1.2h-1.4zM953 439h1.4v1.2h-1.4zM297 438h1.4v1.2h-1.4zM477 438h1.4v1.2h-1.4zM566 438h1.4v1.2h-1.4zM613 438h1.4v1.2h-1.4zM277 438h1.4v1.2h-1.4zM592 437h1.4v1.2h-1.4zM225 438h1.4v1.2h-1.4zM766 438h1.4v1.2h-1.4zM586 438h1.4v1.2h-1.4zM594 438h1.4v1.2h-1.4zM496 438h1.4v1.2h-1.4zM737 438h1.4v1.2h-1.4zM481 438h1.4v1.2h-1.4zM1000 438h1.4v1.2h-1.4zM448 439h1.4v1.2h-1.4zM487 438h1.4v1.2h-1.4zM148 438h1.4v1.2h-1.4zM749 438h1.4v1.2h-1.4zM445 438h1.4v1.2h-1.4zM787 438h1.4v1.2h-1.4zM961 438h1.4v1.2h-1.4zM840 438h1.4v1.2h-1.4zM480 438h1.4v1.2h-1.4zM818 438h1.4v1.2h-1.4zM847 438h1.4v1.2h-1.4zM629 438h1.4v1.2h-1.4zM334 439h1.4v1.2h-1.4zM697 438h1.4v1.2h-1.4zM855 438h1.4v1.2h-1.4zM394 438h1.4v1.2h-1.4zM617 439h1.4v1.2h-1.4zM447 439h1.4v1.2h-1.4zM883 438h1.4v1.2h-1.4zM359 439h1.4v1.2h-1.4zM510 438h1.4v1.2h-1.4zM770 438h1.4v1.2h-1.4zM383 438h1.4v1.2h-1.4zM557 439h1.4v1.2h-1.4zM512 438h1.4v1.2h-1.4zM454 438h1.4v1.2h-1.4zM951 438h1.4v1.2h-1.4zM863 438h1.4v1.2h-1.4zM931 438h1.4v1.2h-1.4zM866 438h1.4v1.2h-1.4zM692 438h1.4v1.2h-1.4zM972 438h1.4v1.2h-1.4zM712 438h1.4v1.2h-1.4zM261 438h1.4v1.2h-1.4zM341 438h1.4v1.2h-1.4zM270 438h1.4v1.2h-1.4zM930 438h1.4v1.2h-1.4zM918 438h1.4v1.2h-1.4zM670 438h1.4v1.2h-1.4zM921 438h1.4v1.2h-1.4zM828 438h1.4v1.2h-1.4zM744 438h1.4v1.2h-1.4zM602 438h1.4v1.2h-1.4zM911 438h1.4v1.2h-1.4zM623 438h1.4v1.2h-1.4zM258 438h1.4v1.2h-1.4zM569 439h1.4v1.2h-1.4zM263 438h1.4v1.2h-1.4zM567 438h1.4v1.2h-1.4zM894 438h1.4v1.2h-1.4zM142 438h1.4v1.2h-1.4zM630 438h1.4v1.2h-1.4zM720 438h1.4v1.2h-1.4zM504 438h1.4v1.2h-1.4zM979 439h1.4v1.2h-1.4zM695 438h1.4v1.2h-1.4zM161 438h1.4v1.2h-1.4zM954 438h1.4v1.2h-1.4zM426 439h1.4v1.2h-1.4zM562 438h1.4v1.2h-1.4zM924 439h1.4v1.2h-1.4zM685 438h1.4v1.2h-1.4zM433 438h1.4v1.2h-1.4zM553 438h1.4v1.2h-1.4zM597 438h1.4v1.2h-1.4zM518 438h1.4v1.2h-1.4zM507 437h1.4v1.2h-1.4zM393 438h1.4v1.2h-1.4zM863 438h1.4v1.2h-1.4zM375 438h1.4v1.2h-1.4zM581 439h1.4v1.2h-1.4zM831 438h1.4v1.2h-1.4zM427 438h1.4v1.2h-1.4zM651 439h1.4v1.2h-1.4zM693 438h1.4v1.2h-1.4zM771 438h1.4v1.2h-1.4zM914 438h1.4v1.2h-1.4zM400 438h1.4v1.2h-1.4zM141 439h1.4v1.2h-1.4zM670 439h1.4v1.2h-1.4zM714 438h1.4v1.2h-1.4zM673 437h1.4v1.2h-1.4zM677 438h1.4v1.2h-1.4zM660 438h1.4v1.2h-1.4zM734 438h1.4v1.2h-1.4zM538 439h1.4v1.2h-1.4zM806 438h1.4v1.2h-1.4zM168 438h1.4v1.2h-1.4zM816 439h1.4v1.2h-1.4zM460 438h1.4v1.2h-1.4zM858 438h1.4v1.2h-1.4zM363 438h1.4v1.2h-1.4zM401 438h1.4v1.2h-1.4zM514 438h1.4v1.2h-1.4zM699 438h1.4v1.2h-1.4zM634 438h1.4v1.2h-1.4zM171 439h1.4v1.2h-1.4zM641 439h1.4v1.2h-1.4zM943 438h1.4v1.2h-1.4zM476 438h1.4v1.2h-1.4zM656 439h1.4v1.2h-1.4zM553 438h1.4v1.2h-1.4zM498 439h1.4v1.2h-1.4zM322 439h1.4v1.2h-1.4zM269 438h1.4v1.2h-1.4zM736 438h1.4v1.2h-1.4zM243 438h1.4v1.2h-1.4zM899 438h1.4v1.2h-1.4zM249 439h1.4v1.2h-1.4zM349 438h1.4v1.2h-1.4zM780 438h1.4v1.2h-1.4zM816 438h1.4v1.2h-1.4zM762 439h1.4v1.2h-1.4zM210 438h1.4v1.2h-1.4zM688 438h1.4v1.2h-1.4zM955 438h1.4v1.2h-1.4zM359 439h1.4v1.2h-1.4zM146 438h1.4v1.2h-1.4zM149 438h1.4v1.2h-1.4zM206 438h1.4v1.2h-1.4zM409 438h1.4v1.2h-1.4zM892 438h1.4v1.2h-1.4zM563 439h1.4v1.2h-1.4zM641 438h1.4v1.2h-1.4zM521 438h1.4v1.2h-1.4zM836 438h1.4v1.2h-1.4zM455 438h1.4v1.2h-1.4zM503 438h1.4v1.2h-1.4zM475 438h1.4v1.2h-1.4zM825 437h1.4v1.2h-1.4zM634 438h1.4v1.2h-1.4zM991 438h1.4v1.2h-1.4zM753 438h1.4v1.2h-1.4zM668 438h1.4v1.2h-1.4zM994 438h1.4v1.2h-1.4zM407 438h1.4v1.2h-1.4zM512 438h1.4v1.2h-1.4zM737 438h1.4v1.2h-1.4zM664 439h1.4v1.2h-1.4zM385 438h1.4v1.2h-1.4zM137 438h1.4v1.2h-1.4zM651 439h1.4v1.2h-1.4zM852 438h1.4v1.2h-1.4zM868 438h1.4v1.2h-1.4zM849 439h1.4v1.2h-1.4zM376 438h1.4v1.2h-1.4zM883 438h1.4v1.2h-1.4zM938 438h1.4v1.2h-1.4zM441 439h1.4v1.2h-1.4zM836 438h1.4v1.2h-1.4zM312 438h1.4v1.2h-1.4zM341 437h1.4v1.2h-1.4zM669 438h1.4v1.2h-1.4zM317 438h1.4v1.2h-1.4zM360 438h1.4v1.2h-1.4zM540 437h1.4v1.2h-1.4zM213 438h1.4v1.2h-1.4zM340 438h1.4v1.2h-1.4zM645 439h1.4v1.2h-1.4zM594 438h1.4v1.2h-1.4zM554 438h1.4v1.2h-1.4zM305 438h1.4v1.2h-1.4zM295 438h1.4v1.2h-1.4zM632 438h1.4v1.2h-1.4zM489 438h1.4v1.2h-1.4zM175 438h1.4v1.2h-1.4zM1011 438h1.4v1.2h-1.4zM692 438h1.4v1.2h-1.4zM827 438h1.4v1.2h-1.4zM439 439h1.4v1.2h-1.4zM592 438h1.4v1.2h-1.4zM1006 438h1.4v1.2h-1.4zM896 438h1.4v1.2h-1.4zM366 438h1.4v1.2h-1.4zM820 437h1.4v1.2h-1.4zM810 439h1.4v1.2h-1.4zM855 438h1.4v1.2h-1.4zM169 438h1.4v1.2h-1.4zM312 438h1.4v1.2h-1.4zM181 438h1.4v1.2h-1.4zM625 439h1.4v1.2h-1.4zM968 438h1.4v1.2h-1.4zM935 439h1.4v1.2h-1.4zM485 438h1.4v1.2h-1.4zM241 438h1.4v1.2h-1.4zM632 438h1.4v1.2h-1.4zM698 439h1.4v1.2h-1.4zM481 438h1.4v1.2h-1.4zM530 439h1.4v1.2h-1.4zM1007 439h1.4v1.2h-1.4zM331 438h1.4v1.2h-1.4zM445 438h1.4v1.2h-1.4zM929 439h1.4v1.2h-1.4zM177 438h1.4v1.2h-1.4zM826 438h1.4v1.2h-1.4zM1001 438h1.4v1.2h-1.4zM185 439h1.4v1.2h-1.4zM961 439h1.4v1.2h-1.4zM730 438h1.4v1.2h-1.4zM801 439h1.4v1.2h-1.4zM229 438h1.4v1.2h-1.4zM245 438h1.4v1.2h-1.4zM559 438h1.4v1.2h-1.4zM262 438h1.4v1.2h-1.4zM731 439h1.4v1.2h-1.4zM307 438h1.4v1.2h-1.4zM168 438h1.4v1.2h-1.4zM956 438h1.4v1.2h-1.4zM897 438h1.4v1.2h-1.4zM529 438h1.4v1.2h-1.4zM221 439h1.4v1.2h-1.4zM688 438h1.4v1.2h-1.4zM533 438h1.4v1.2h-1.4zM555 439h1.4v1.2h-1.4zM688 438h1.4v1.2h-1.4zM186 438h1.4v1.2h-1.4zM763 438h1.4v1.2h-1.4zM900 438h1.4v1.2h-1.4zM370 438h1.4v1.2h-1.4zM374 438h1.4v1.2h-1.4zM873 438h1.4v1.2h-1.4zM567 438h1.4v1.2h-1.4zM415 438h1.4v1.2h-1.4zM995 438h1.4v1.2h-1.4zM186 439h1.4v1.2h-1.4zM321 438h1.4v1.2h-1.4zM555 438h1.4v1.2h-1.4zM313 439h1.4v1.2h-1.4zM456 440h1.4v1.2h-1.4zM948 438h1.4v1.2h-1.4zM222 438h1.4v1.2h-1.4zM186 439h1.4v1.2h-1.4zM774 438h1.4v1.2h-1.4zM150 439h1.4v1.2h-1.4zM845 438h1.4v1.2h-1.4zM138 438h1.4v1.2h-1.4zM867 438h1.4v1.2h-1.4zM518 438h1.4v1.2h-1.4zM937 438h1.4v1.2h-1.4zM257 439h1.4v1.2h-1.4zM294 438h1.4v1.2h-1.4zM309 438h1.4v1.2h-1.4zM206 439h1.4v1.2h-1.4zM571 438h1.4v1.2h-1.4zM376 438h1.4v1.2h-1.4zM757 439h1.4v1.2h-1.4zM849 438h1.4v1.2h-1.4zM194 438h1.4v1.2h-1.4zM779 438h1.4v1.2h-1.4zM185 439h1.4v1.2h-1.4zM848 438h1.4v1.2h-1.4zM895 439h1.4v1.2h-1.4zM569 439h1.4v1.2h-1.4zM554 438h1.4v1.2h-1.4zM902 438h1.4v1.2h-1.4zM866 438h1.4v1.2h-1.4zM458 438h1.4v1.2h-1.4zM658 439h1.4v1.2h-1.4zM140 438h1.4v1.2h-1.4zM589 438h1.4v1.2h-1.4zM242 438h1.4v1.2h-1.4zM896 437h1.4v1.2h-1.4zM418 438h1.4v1.2h-1.4zM796 438h1.4v1.2h-1.4zM190 439h1.4v1.2h-1.4zM570 437h1.4v1.2h-1.4zM587 438h1.4v1.2h-1.4zM154 438h1.4v1.2h-1.4zM985 438h1.4v1.2h-1.4zM226 438h1.4v1.2h-1.4zM356 438h1.4v1.2h-1.4zM221 438h1.4v1.2h-1.4zM750 438h1.4v1.2h-1.4zM662 438h1.4v1.2h-1.4zM642 438h1.4v1.2h-1.4zM226 438h1.4v1.2h-1.4zM899 438h1.4v1.2h-1.4zM244 438h1.4v1.2h-1.4zM569 438h1.4v1.2h-1.4zM243 438h1.4v1.2h-1.4zM492 439h1.4v1.2h-1.4zM892 439h1.4v1.2h-1.4zM265 438h1.4v1.2h-1.4zM280 438h1.4v1.2h-1.4zM861 439h1.4v1.2h-1.4zM505 438h1.4v1.2h-1.4zM873 438h1.4v1.2h-1.4zM962 438h1.4v1.2h-1.4zM818 438h1.4v1.2h-1.4zM430 438h1.4v1.2h-1.4zM518 439h1.4v1.2h-1.4zM937 438h1.4v1.2h-1.4zM852 438h1.4v1.2h-1.4zM590 438h1.4v1.2h-1.4zM977 438h1.4v1.2h-1.4zM507 438h1.4v1.2h-1.4zM692 438h1.4v1.2h-1.4zM197 439h1.4v1.2h-1.4zM516 438h1.4v1.2h-1.4zM258 438h1.4v1.2h-1.4zM987 438h1.4v1.2h-1.4zM692 437h1.4v1.2h-1.4zM847 439h1.4v1.2h-1.4zM166 438h1.4v1.2h-1.4zM699 438h1.4v1.2h-1.4zM376 439h1.4v1.2h-1.4zM612 439h1.4v1.2h-1.4zM356 438h1.4v1.2h-1.4zM593 437h1.4v1.2h-1.4zM388 439h1.4v1.2h-1.4zM404 438h1.4v1.2h-1.4zM658 438h1.4v1.2h-1.4zM975 438h1.4v1.2h-1.4zM546 438h1.4v1.2h-1.4zM605 438h1.4v1.2h-1.4zM251 438h1.4v1.2h-1.4zM394 438h1.4v1.2h-1.4zM350 438h1.4v1.2h-1.4zM213 437h1.4v1.2h-1.4zM672 438h1.4v1.2h-1.4zM637 438h1.4v1.2h-1.4zM760 438h1.4v1.2h-1.4zM541 438h1.4v1.2h-1.4zM548 438h1.4v1.2h-1.4zM409 438h1.4v1.2h-1.4zM586 438h1.4v1.2h-1.4zM472 438h1.4v1.2h-1.4zM446 438h1.4v1.2h-1.4zM893 438h1.4v1.2h-1.4zM567 439h1.4v1.2h-1.4zM386 439h1.4v1.2h-1.4zM814 438h1.4v1.2h-1.4zM275 439h1.4v1.2h-1.4zM522 439h1.4v1.2h-1.4zM190 438h1.4v1.2h-1.4zM782 438h1.4v1.2h-1.4zM232 438h1.4v1.2h-1.4zM785 439h1.4v1.2h-1.4zM272 438h1.4v1.2h-1.4zM729 439h1.4v1.2h-1.4zM677 439h1.4v1.2h-1.4zM591 438h1.4v1.2h-1.4zM785 438h1.4v1.2h-1.4zM553 438h1.4v1.2h-1.4zM825 438h1.4v1.2h-1.4zM248 437h1.4v1.2h-1.4zM901 439h1.4v1.2h-1.4zM650 438h1.4v1.2h-1.4zM573 439h1.4v1.2h-1.4zM503 438h1.4v1.2h-1.4zM824 439h1.4v1.2h-1.4zM469 438h1.4v1.2h-1.4zM533 438h1.4v1.2h-1.4zM393 438h1.4v1.2h-1.4zM479 438h1.4v1.2h-1.4zM419 438h1.4v1.2h-1.4zM827 438h1.4v1.2h-1.4zM526 438h1.4v1.2h-1.4zM298 438h1.4v1.2h-1.4zM641 438h1.4v1.2h-1.4zM647 439h1.4v1.2h-1.4zM420 439h1.4v1.2h-1.4zM876 439h1.4v1.2h-1.4zM315 437h1.4v1.2h-1.4zM510 438h1.4v1.2h-1.4zM178 438h1.4v1.2h-1.4zM632 437h1.4v1.2h-1.4zM815 438h1.4v1.2h-1.4zM609 439h1.4v1.2h-1.4zM590 438h1.4v1.2h-1.4zM738 438h1.4v1.2h-1.4zM658 438h1.4v1.2h-1.4zM444 439h1.4v1.2h-1.4zM597 438h1.4v1.2h-1.4zM223 438h1.4v1.2h-1.4zM629 438h1.4v1.2h-1.4zM640 439h1.4v1.2h-1.4zM563 437h1.4v1.2h-1.4zM522 437h1.4v1.2h-1.4zM437 437h1.4v1.2h-1.4zM601 438h1.4v1.2h-1.4zM415 438h1.4v1.2h-1.4zM995 438h1.4v1.2h-1.4zM233 438h1.4v1.2h-1.4zM921 438h1.4v1.2h-1.4zM1005 438h1.4v1.2h-1.4zM916 438h1.4v1.2h-1.4zM391 438h1.4v1.2h-1.4zM585 438h1.4v1.2h-1.4zM296 438h1.4v1.2h-1.4zM689 438h1.4v1.2h-1.4zM1009 438h1.4v1.2h-1.4zM695 439h1.4v1.2h-1.4zM828 438h1.4v1.2h-1.4zM405 438h1.4v1.2h-1.4zM403 438h1.4v1.2h-1.4zM875 438h1.4v1.2h-1.4zM309 438h1.4v1.2h-1.4zM573 438h1.4v1.2h-1.4zM704 438h1.4v1.2h-1.4zM603 439h1.4v1.2h-1.4zM497 438h1.4v1.2h-1.4zM243 439h1.4v1.2h-1.4zM230 439h1.4v1.2h-1.4zM224 438h1.4v1.2h-1.4zM859 439h1.4v1.2h-1.4zM674 438h1.4v1.2h-1.4zM147 438h1.4v1.2h-1.4zM813 438h1.4v1.2h-1.4zM447 439h1.4v1.2h-1.4zM285 438h1.4v1.2h-1.4zM930 438h1.4v1.2h-1.4zM647 438h1.4v1.2h-1.4zM475 439h1.4v1.2h-1.4zM184 439h1.4v1.2h-1.4zM979 438h1.4v1.2h-1.4zM522 438h1.4v1.2h-1.4zM175 438h1.4v1.2h-1.4zM953 438h1.4v1.2h-1.4zM925 438h1.4v1.2h-1.4zM852 438h1.4v1.2h-1.4zM979 439h1.4v1.2h-1.4zM571 438h1.4v1.2h-1.4zM478 438h1.4v1.2h-1.4zM767 438h1.4v1.2h-1.4zM905 439h1.4v1.2h-1.4zM561 438h1.4v1.2h-1.4zM288 438h1.4v1.2h-1.4zM451 439h1.4v1.2h-1.4zM391 439h1.4v1.2h-1.4zM629 439h1.4v1.2h-1.4zM475 439h1.4v1.2h-1.4zM490 438h1.4v1.2h-1.4zM861 438h1.4v1.2h-1.4zM444 438h1.4v1.2h-1.4zM385 438h1.4v1.2h-1.4zM344 439h1.4v1.2h-1.4zM436 438h1.4v1.2h-1.4zM273 438h1.4v1.2h-1.4zM373 438h1.4v1.2h-1.4zM869 439h1.4v1.2h-1.4zM870 439h1.4v1.2h-1.4zM843 438h1.4v1.2h-1.4zM770 439h1.4v1.2h-1.4zM467 438h1.4v1.2h-1.4zM971 438h1.4v1.2h-1.4zM579 438h1.4v1.2h-1.4zM251 439h1.4v1.2h-1.4zM756 438h1.4v1.2h-1.4zM652 439h1.4v1.2h-1.4zM459 438h1.4v1.2h-1.4zM323 439h1.4v1.2h-1.4zM902 439h1.4v1.2h-1.4zM612 439h1.4v1.2h-1.4zM373 438h1.4v1.2h-1.4zM713 438h1.4v1.2h-1.4zM634 438h1.4v1.2h-1.4zM212 439h1.4v1.2h-1.4zM291 438h1.4v1.2h-1.4zM718 438h1.4v1.2h-1.4zM232 438h1.4v1.2h-1.4zM575 438h1.4v1.2h-1.4zM397 439h1.4v1.2h-1.4zM335 438h1.4v1.2h-1.4zM247 438h1.4v1.2h-1.4zM490 438h1.4v1.2h-1.4zM934 438h1.4v1.2h-1.4zM892 437h1.4v1.2h-1.4zM252 438h1.4v1.2h-1.4zM733 438h1.4v1.2h-1.4zM719 438h1.4v1.2h-1.4zM715 439h1.4v1.2h-1.4zM750 438h1.4v1.2h-1.4zM445 439h1.4v1.2h-1.4zM688 438h1.4v1.2h-1.4zM937 438h1.4v1.2h-1.4zM780 438h1.4v1.2h-1.4zM171 438h1.4v1.2h-1.4zM278 438h1.4v1.2h-1.4zM470 439h1.4v1.2h-1.4zM170 438h1.4v1.2h-1.4zM294 439h1.4v1.2h-1.4zM873 438h1.4v1.2h-1.4zM360 438h1.4v1.2h-1.4zM518 438h1.4v1.2h-1.4zM137 438h1.4v1.2h-1.4zM868 438h1.4v1.2h-1.4zM174 438h1.4v1.2h-1.4zM886 438h1.4v1.2h-1.4zM351 438h1.4v1.2h-1.4zM234 438h1.4v1.2h-1.4zM939 438h1.4v1.2h-1.4zM794 439h1.4v1.2h-1.4zM482 439h1.4v1.2h-1.4zM792 438h1.4v1.2h-1.4zM215 438h1.4v1.2h-1.4zM967 437h1.4v1.2h-1.4zM743 439h1.4v1.2h-1.4zM785 438h1.4v1.2h-1.4zM534 438h1.4v1.2h-1.4zM184 438h1.4v1.2h-1.4zM585 438h1.4v1.2h-1.4zM951 439h1.4v1.2h-1.4zM174 439h1.4v1.2h-1.4zM753 438h1.4v1.2h-1.4zM616 438h1.4v1.2h-1.4zM987 438h1.4v1.2h-1.4zM355 438h1.4v1.2h-1.4zM188 438h1.4v1.2h-1.4zM313 439h1.4v1.2h-1.4zM409 439h1.4v1.2h-1.4zM725 439h1.4v1.2h-1.4zM345 438h1.4v1.2h-1.4zM527 439h1.4v1.2h-1.4zM958 438h1.4v1.2h-1.4zM913 438h1.4v1.2h-1.4zM261 438h1.4v1.2h-1.4zM852 438h1.4v1.2h-1.4zM617 438h1.4v1.2h-1.4zM721 438h1.4v1.2h-1.4zM662 438h1.4v1.2h-1.4zM866 438h1.4v1.2h-1.4zM237 438h1.4v1.2h-1.4zM317 439h1.4v1.2h-1.4zM189 438h1.4v1.2h-1.4zM752 438h1.4v1.2h-1.4zM529 438h1.4v1.2h-1.4zM547 438h1.4v1.2h-1.4zM455 438h1.4v1.2h-1.4zM145 438h1.4v1.2h-1.4zM1007 438h1.4v1.2h-1.4zM766 438h1.4v1.2h-1.4zM997 438h1.4v1.2h-1.4zM565 438h1.4v1.2h-1.4zM517 438h1.4v1.2h-1.4zM143 439h1.4v1.2h-1.4zM943 438h1.4v1.2h-1.4zM957 438h1.4v1.2h-1.4zM709 438h1.4v1.2h-1.4zM258 439h1.4v1.2h-1.4zM160 438h1.4v1.2h-1.4zM396 437h1.4v1.2h-1.4zM299 438h1.4v1.2h-1.4zM950 438h1.4v1.2h-1.4zM284 438h1.4v1.2h-1.4zM788 437h1.4v1.2h-1.4zM423 438h1.4v1.2h-1.4zM417 439h1.4v1.2h-1.4zM460 438h1.4v1.2h-1.4zM866 438h1.4v1.2h-1.4zM346 439h1.4v1.2h-1.4zM688 438h1.4v1.2h-1.4zM856 438h1.4v1.2h-1.4zM966 437h1.4v1.2h-1.4zM570 438h1.4v1.2h-1.4zM399 438h1.4v1.2h-1.4zM646 439h1.4v1.2h-1.4zM280 438h1.4v1.2h-1.4zM525 438h1.4v1.2h-1.4zM171 438h1.4v1.2h-1.4zM522 438h1.4v1.2h-1.4zM138 439h1.4v1.2h-1.4zM874 439h1.4v1.2h-1.4zM510 438h1.4v1.2h-1.4zM385 438h1.4v1.2h-1.4zM506 438h1.4v1.2h-1.4zM433 438h1.4v1.2h-1.4zM861 438h1.4v1.2h-1.4zM930 438h1.4v1.2h-1.4zM525 438h1.4v1.2h-1.4zM631 438h1.4v1.2h-1.4zM211 438h1.4v1.2h-1.4zM420 437h1.4v1.2h-1.4zM934 438h1.4v1.2h-1.4zM896 439h1.4v1.2h-1.4zM680 438h1.4v1.2h-1.4zM848 439h1.4v1.2h-1.4zM671 438h1.4v1.2h-1.4zM397 437h1.4v1.2h-1.4zM558 438h1.4v1.2h-1.4zM704 438h1.4v1.2h-1.4zM913 439h1.4v1.2h-1.4zM160 438h1.4v1.2h-1.4zM529 439h1.4v1.2h-1.4zM211 438h1.4v1.2h-1.4zM646 438h1.4v1.2h-1.4zM502 438h1.4v1.2h-1.4zM484 438h1.4v1.2h-1.4zM236 439h1.4v1.2h-1.4zM617 439h1.4v1.2h-1.4zM235 438h1.4v1.2h-1.4zM219 438h1.4v1.2h-1.4zM602 438h1.4v1.2h-1.4zM622 439h1.4v1.2h-1.4zM335 438h1.4v1.2h-1.4zM587 438h1.4v1.2h-1.4zM653 439h1.4v1.2h-1.4zM201 438h1.4v1.2h-1.4zM522 439h1.4v1.2h-1.4zM763 438h1.4v1.2h-1.4zM801 439h1.4v1.2h-1.4zM770 439h1.4v1.2h-1.4zM226 438h1.4v1.2h-1.4zM286 438h1.4v1.2h-1.4zM979 438h1.4v1.2h-1.4zM256 438h1.4v1.2h-1.4zM817 438h1.4v1.2h-1.4zM463 438h1.4v1.2h-1.4zM149 438h1.4v1.2h-1.4zM399 438h1.4v1.2h-1.4zM757 437h1.4v1.2h-1.4zM681 439h1.4v1.2h-1.4zM902 437h1.4v1.2h-1.4zM901 438h1.4v1.2h-1.4zM284 438h1.4v1.2h-1.4zM806 438h1.4v1.2h-1.4zM733 438h1.4v1.2h-1.4zM464 438h1.4v1.2h-1.4zM783 439h1.4v1.2h-1.4zM174 438h1.4v1.2h-1.4zM666 439h1.4v1.2h-1.4zM841 438h1.4v1.2h-1.4zM235 439h1.4v1.2h-1.4zM360 438h1.4v1.2h-1.4zM306 437h1.4v1.2h-1.4zM646 438h1.4v1.2h-1.4zM236 438h1.4v1.2h-1.4zM839 438h1.4v1.2h-1.4zM299 438h1.4v1.2h-1.4zM739 438h1.4v1.2h-1.4zM470 439h1.4v1.2h-1.4zM609 439h1.4v1.2h-1.4zM741 439h1.4v1.2h-1.4zM148 437h1.4v1.2h-1.4zM437 438h1.4v1.2h-1.4zM903 439h1.4v1.2h-1.4zM839 438h1.4v1.2h-1.4zM854 438h1.4v1.2h-1.4zM733 438h1.4v1.2h-1.4zM275 438h1.4v1.2h-1.4zM878 438h1.4v1.2h-1.4zM672 439h1.4v1.2h-1.4zM203 438h1.4v1.2h-1.4zM921 438h1.4v1.2h-1.4zM653 438h1.4v1.2h-1.4zM453 438h1.4v1.2h-1.4zM547 438h1.4v1.2h-1.4zM447 438h1.4v1.2h-1.4zM141 438h1.4v1.2h-1.4zM154 438h1.4v1.2h-1.4zM539 438h1.4v1.2h-1.4zM264 438h1.4v1.2h-1.4zM725 438h1.4v1.2h-1.4zM575 439h1.4v1.2h-1.4zM366 438h1.4v1.2h-1.4zM976 438h1.4v1.2h-1.4zM1007 439h1.4v1.2h-1.4zM813 438h1.4v1.2h-1.4zM902 438h1.4v1.2h-1.4zM693 438h1.4v1.2h-1.4zM455 438h1.4v1.2h-1.4zM902 439h1.4v1.2h-1.4zM960 438h1.4v1.2h-1.4zM806 438h1.4v1.2h-1.4zM785 438h1.4v1.2h-1.4zM444 438h1.4v1.2h-1.4zM620 438h1.4v1.2h-1.4zM432 438h1.4v1.2h-1.4zM420 439h1.4v1.2h-1.4zM458 438h1.4v1.2h-1.4zM350 438h1.4v1.2h-1.4zM255 439h1.4v1.2h-1.4zM142 439h1.4v1.2h-1.4zM527 438h1.4v1.2h-1.4zM635 438h1.4v1.2h-1.4zM194 438h1.4v1.2h-1.4zM401 438h1.4v1.2h-1.4zM620 439h1.4v1.2h-1.4zM959 438h1.4v1.2h-1.4zM648 439h1.4v1.2h-1.4zM206 438h1.4v1.2h-1.4zM1003 439h1.4v1.2h-1.4zM449 438h1.4v1.2h-1.4zM898 438h1.4v1.2h-1.4zM195 437h1.4v1.2h-1.4zM378 438h1.4v1.2h-1.4zM362 438h1.4v1.2h-1.4zM371 438h1.4v1.2h-1.4zM754 438h1.4v1.2h-1.4zM312 439h1.4v1.2h-1.4zM665 439h1.4v1.2h-1.4zM309 438h1.4v1.2h-1.4zM780 439h1.4v1.2h-1.4zM206 438h1.4v1.2h-1.4zM847 438h1.4v1.2h-1.4zM256 438h1.4v1.2h-1.4zM301 437h1.4v1.2h-1.4zM698 438h1.4v1.2h-1.4zM946 438h1.4v1.2h-1.4zM794 439h1.4v1.2h-1.4zM706 438h1.4v1.2h-1.4zM433 439h1.4v1.2h-1.4zM186 438h1.4v1.2h-1.4zM686 438h1.4v1.2h-1.4zM430 438h1.4v1.2h-1.4zM362 438h1.4v1.2h-1.4zM543 439h1.4v1.2h-1.4zM631 438h1.4v1.2h-1.4zM1003 439h1.4v1.2h-1.4zM772 438h1.4v1.2h-1.4zM425 438h1.4v1.2h-1.4zM261 438h1.4v1.2h-1.4zM810 439h1.4v1.2h-1.4zM508 439h1.4v1.2h-1.4zM609 438h1.4v1.2h-1.4zM713 438h1.4v1.2h-1.4zM664 438h1.4v1.2h-1.4zM362 439h1.4v1.2h-1.4zM761 438h1.4v1.2h-1.4zM408 438h1.4v1.2h-1.4zM814 439h1.4v1.2h-1.4zM380 438h1.4v1.2h-1.4zM595 438h1.4v1.2h-1.4zM144 438h1.4v1.2h-1.4zM554 438h1.4v1.2h-1.4zM454 438h1.4v1.2h-1.4zM1005 438h1.4v1.2h-1.4zM215 439h1.4v1.2h-1.4zM161 438h1.4v1.2h-1.4zM577 438h1.4v1.2h-1.4zM624 439h1.4v1.2h-1.4zM457 439h1.4v1.2h-1.4zM267 438h1.4v1.2h-1.4zM945 439h1.4v1.2h-1.4zM278 439h1.4v1.2h-1.4zM349 438h1.4v1.2h-1.4zM998 438h1.4v1.2h-1.4zM438 438h1.4v1.2h-1.4zM839 438h1.4v1.2h-1.4zM929 438h1.4v1.2h-1.4zM231 438h1.4v1.2h-1.4zM703 438h1.4v1.2h-1.4zM489 438h1.4v1.2h-1.4zM631 438h1.4v1.2h-1.4zM496 439h1.4v1.2h-1.4zM687 438h1.4v1.2h-1.4zM333 438h1.4v1.2h-1.4zM517 439h1.4v1.2h-1.4zM339 438h1.4v1.2h-1.4zM700 439h1.4v1.2h-1.4zM398 438h1.4v1.2h-1.4zM636 438h1.4v1.2h-1.4zM274 439h1.4v1.2h-1.4zM371 438h1.4v1.2h-1.4zM796 438h1.4v1.2h-1.4zM427 438h1.4v1.2h-1.4zM562 438h1.4v1.2h-1.4zM735 438h1.4v1.2h-1.4zM661 438h1.4v1.2h-1.4zM911 438h1.4v1.2h-1.4zM320 438h1.4v1.2h-1.4zM821 438h1.4v1.2h-1.4zM894 439h1.4v1.2h-1.4zM1009 439h1.4v1.2h-1.4zM397 438h1.4v1.2h-1.4zM991 438h1.4v1.2h-1.4zM144 438h1.4v1.2h-1.4zM782 438h1.4v1.2h-1.4zM222 438h1.4v1.2h-1.4zM215 439h1.4v1.2h-1.4zM434 439h1.4v1.2h-1.4zM910 438h1.4v1.2h-1.4zM996 438h1.4v1.2h-1.4zM831 438h1.4v1.2h-1.4zM741 439h1.4v1.2h-1.4zM339 438h1.4v1.2h-1.4zM514 438h1.4v1.2h-1.4zM1006 438h1.4v1.2h-1.4zM414 438h1.4v1.2h-1.4zM564 438h1.4v1.2h-1.4zM255 438h1.4v1.2h-1.4zM738 438h1.4v1.2h-1.4zM266 438h1.4v1.2h-1.4zM235 438h1.4v1.2h-1.4zM446 437h1.4v1.2h-1.4zM443 438h1.4v1.2h-1.4zM325 439h1.4v1.2h-1.4zM778 438h1.4v1.2h-1.4zM376 438h1.4v1.2h-1.4zM197 438h1.4v1.2h-1.4zM174 438h1.4v1.2h-1.4zM625 438h1.4v1.2h-1.4zM454 439h1.4v1.2h-1.4zM709 438h1.4v1.2h-1.4zM614 438h1.4v1.2h-1.4zM999 438h1.4v1.2h-1.4zM903 438h1.4v1.2h-1.4zM415 438h1.4v1.2h-1.4zM504 439h1.4v1.2h-1.4zM474 438h1.4v1.2h-1.4zM496 439h1.4v1.2h-1.4zM141 439h1.4v1.2h-1.4zM670 438h1.4v1.2h-1.4zM672 438h1.4v1.2h-1.4zM467 438h1.4v1.2h-1.4zM238 438h1.4v1.2h-1.4zM876 438h1.4v1.2h-1.4zM179 437h1.4v1.2h-1.4zM745 438h1.4v1.2h-1.4zM618 439h1.4v1.2h-1.4zM413 438h1.4v1.2h-1.4zM791 438h1.4v1.2h-1.4zM885 438h1.4v1.2h-1.4zM1009 438h1.4v1.2h-1.4zM342 438h1.4v1.2h-1.4zM469 438h1.4v1.2h-1.4zM761 438h1.4v1.2h-1.4zM674 439h1.4v1.2h-1.4zM731 438h1.4v1.2h-1.4zM613 439h1.4v1.2h-1.4zM332 438h1.4v1.2h-1.4zM934 438h1.4v1.2h-1.4zM552 438h1.4v1.2h-1.4zM554 438h1.4v1.2h-1.4zM330 439h1.4v1.2h-1.4zM600 439h1.4v1.2h-1.4zM596 437h1.4v1.2h-1.4zM346 438h1.4v1.2h-1.4zM287 438h1.4v1.2h-1.4zM698 438h1.4v1.2h-1.4zM862 439h1.4v1.2h-1.4zM174 438h1.4v1.2h-1.4zM471 439h1.4v1.2h-1.4zM244 438h1.4v1.2h-1.4zM271 438h1.4v1.2h-1.4zM449 438h1.4v1.2h-1.4zM841 438h1.4v1.2h-1.4zM213 438h1.4v1.2h-1.4zM483 439h1.4v1.2h-1.4zM530 438h1.4v1.2h-1.4zM556 438h1.4v1.2h-1.4zM268 438h1.4v1.2h-1.4zM733 438h1.4v1.2h-1.4zM345 439h1.4v1.2h-1.4zM462 438h1.4v1.2h-1.4zM152 439h1.4v1.2h-1.4zM312 438h1.4v1.2h-1.4zM293 438h1.4v1.2h-1.4zM767 438h1.4v1.2h-1.4zM348 439h1.4v1.2h-1.4zM868 439h1.4v1.2h-1.4zM890 439h1.4v1.2h-1.4zM313 438h1.4v1.2h-1.4zM678 439h1.4v1.2h-1.4zM462 439h1.4v1.2h-1.4zM458 438h1.4v1.2h-1.4zM762 438h1.4v1.2h-1.4zM705 439h1.4v1.2h-1.4zM848 438h1.4v1.2h-1.4zM644 439h1.4v1.2h-1.4zM948 439h1.4v1.2h-1.4zM761 439h1.4v1.2h-1.4zM463 438h1.4v1.2h-1.4zM198 438h1.4v1.2h-1.4zM800 438h1.4v1.2h-1.4zM572 439h1.4v1.2h-1.4zM927 438h1.4v1.2h-1.4zM656 438h1.4v1.2h-1.4zM542 437h1.4v1.2h-1.4zM500 438h1.4v1.2h-1.4zM552 439h1.4v1.2h-1.4zM567 438h1.4v1.2h-1.4zM585 438h1.4v1.2h-1.4zM786 438h1.4v1.2h-1.4zM489 439h1.4v1.2h-1.4zM622 438h1.4v1.2h-1.4zM811 438h1.4v1.2h-1.4zM330 438h1.4v1.2h-1.4zM204 438h1.4v1.2h-1.4zM213 438h1.4v1.2h-1.4zM797 438h1.4v1.2h-1.4zM734 438h1.4v1.2h-1.4zM760 438h1.4v1.2h-1.4zM743 438h1.4v1.2h-1.4zM503 437h1.4v1.2h-1.4zM853 437h1.4v1.2h-1.4zM902 438h1.4v1.2h-1.4zM591 438h1.4v1.2h-1.4zM141 439h1.4v1.2h-1.4zM366 438h1.4v1.2h-1.4zM411 438h1.4v1.2h-1.4zM624 439h1.4v1.2h-1.4zM585 438h1.4v1.2h-1.4zM403 438h1.4v1.2h-1.4zM897 438h1.4v1.2h-1.4zM362 437h1.4v1.2h-1.4zM313 439h1.4v1.2h-1.4zM464 438h1.4v1.2h-1.4zM544 438h1.4v1.2h-1.4zM457 438h1.4v1.2h-1.4zM840 438h1.4v1.2h-1.4zM624 439h1.4v1.2h-1.4zM181 438h1.4v1.2h-1.4zM495 439h1.4v1.2h-1.4z" fill="#303030" fill-opacity="0.65"/>
<path d="M219 219h1.4v1.2h-1.4zM289 218h1.4v1.2h-1.4zM289 219h1.4v1.2h-1.4zM237 218h1.4v1.2h-1.4zM279 218h1.4v1.2h-1.4zM199 219h1.4v1.2h-1.4zM238 218h1.4v1.2h-1.4zM257 218h1.4v1.2h-1.4zM187 218h1.4v1.2h-1.4zM231 218h1.4v1.2h-1.4zM230 218h1.4v1.2h-1.4zM225 218h1.4v1.2h-1.4zM261 218h1.4v1.2h-1.4zM187 218h1.4v1.2h-1.4zM259 218h1.4v1.2h-1.4zM209 219h1.4v1.2h-1.4zM296 218h1.4v1.2h-1.4zM256 218h1.4v1.2h-1.4zM224 218h1.4v1.2h-1.4zM224 218h1.4v1.2h-1.4zM258 218h1.4v1.2h-1.4zM200 218h1.4v1.2h-1.4z" fill="#606040" fill-opacity="0.2"/>
<polyline points="136.0,438.6 140.9,431.8 145.8,424.9 150.6,418.1 155.5,411.4 160.4,404.6 165.3,397.9 170.1,391.2 175.0,384.6 179.9,378.1 184.8,371.6 189.7,365.3 194.5,359.0 199.4,352.8 204.3,346.7 209.2,340.7 214.0,334.9 218.9,329.1 223.8,323.5 228.7,318.1 233.6,312.8 238.4,307.6 243.3,302.6 248.2,297.8 253.1,293.1 257.9,288.6 262.8,284.3 267.7,280.2 272.6,276.3 277.5,272.6 282.3,269.1 287.2,265.8 292.1,262.7 297.0,259.8 301.8,257.1 306.7,254.7 311.6,252.4 316.5,250.4 321.4,248.7 326.2,247.1 331.1,245.8 336.0,244.8 340.9,243.9 345.7,243.3 350.6,243.0 355.5,242.8 360.4,243.0 365.3,243.3 370.1,243.9 375.0,244.8 379.9,245.8 384.8,247.1 389.6,248.7 394.5,250.4 399.4,252.4 404.3,254.7 409.2,257.1 414.0,259.8 418.9,262.7 423.8,265.8 428.7,269.1 433.5,272.6 438.4,276.3 443.3,280.2 448.2,284.3 453.1,288.6 457.9,293.1 462.8,297.8 467.7,302.6 472.6,307.6 477.4,312.8 482.3,318.1 487.2,323.5 492.1,329.1 497.0,334.9 501.8,340.7 506.7,346.7 511.6,352.8 516.5,359.0 521.3,365.3 526.2,371.6 531.1,378.1 536.0,384.6 540.9,391.2 545.7,397.9 550.6,404.6 555.5,411.4 560.4,418.1 565.2,424.9 570.1,431.8 575.0,438.6 579.9,445.4 584.8,452.3 589.6,459.1 594.5,465.8 599.4,472.6 604.3,479.3 609.1,486.0 614.0,492.6 618.9,499.1 623.8,505.6 628.7,511.9 633.5,518.2 638.4,524.4 643.3,530.5 648.2,536.5 653.0,542.3 657.9,548.1 662.8,553.7 667.7,559.1 672.6,564.4 677.4,569.6 682.3,574.6 687.2,579.4 692.1,584.1 696.9,588.6 701.8,592.9 706.7,597.0 711.6,600.9 716.5,604.6 721.3,608.1 726.2,611.4 731.1,614.5 736.0,617.4 740.8,620.1 745.7,622.5 750.6,624.8 755.5,626.8 760.4,628.5 765.2,630.1 770.1,631.4 775.0,632.4 779.9,633.3 784.7,633.9 789.6,634.2 794.5,634.3 799.4,634.2 804.3,633.9 809.1,633.3 814.0,632.4 818.9,631.4 823.8,630.1 828.6,628.5 833.5,626.8 838.4,624.8 843.3,622.5 848.2,620.1 853.0,617.4 857.9,614.5 862.8,611.4 867.7,608.1 872.5,604.6 877.4,600.9 882.3,597.0 887.2,592.9 892.1,588.6 896.9,584.1 901.8,579.4 906.7,574.6 911.6,569.6 916.4,564.4 921.3,559.1 926.2,553.7 931.1,548.1 936.0,542.3 940.8,536.5 945.7,530.5 950.6,524.4 955.5,518.2 960.3,511.9 965.2,505.6 970.1,499.1 975.0,492.6 979.9,486.0 984.7,479.3 989.6,472.6 994.5,465.8 999.4,459.1 1004.2,452.3 1009.1,445.4 1014.0,438.6" fill="none" stroke="#e8a262" stroke-width="1.9"/>
</svg>

<div class="a lbl" style="left:59px;top:-5px;">测量日期：</div>
<div class="a val" style="left:150px;top:-5px;">2017年7月31日星期一<span style="display:inline-block;width:11px"></span>下午4:07</div>
<div class="a lbl" style="left:59px;top:20px;">测量模式：</div>
<div class="a val" style="left:150px;top:20px;">ＤＡＣ测量</div>

<div class="btn" style="left:58px;width:64px;"><svg class="ic" width="18" height="19" viewBox="0 0 18 19"><rect x="0.5" y="2.5" width="14" height="16" fill="#f4f6f0" stroke="#c8ccc8"/><path d="M2 16 L15 2" stroke="#d8b888" stroke-width="3"/><path d="M14 1 L17 4" stroke="#9a8a70" stroke-width="1.5"/><circle cx="3" cy="8" r="1" fill="#8aa070"/><circle cx="3" cy="12" r="1" fill="#8aa070"/><circle cx="3" cy="16" r="1" fill="#8aa070"/></svg><span>概括</span></div>
<div class="btn" style="left:130px;width:63px;"><svg class="ic" width="18" height="17" viewBox="0 0 18 17"><rect x="0.5" y="0.5" width="17" height="16" fill="#e6eeee" stroke="#c0cccc"/><rect x="1.5" y="2.5" width="15" height="12" fill="#2a4c3a"/><line x1="1.5" y1="9.5" x2="16.5" y2="9.5" stroke="#9cc0a8" stroke-width="0.8" stroke-opacity="0.6"/><path d="M2 10 L8 10 L9 7 L10 12 L11 10 L16 10" stroke="#6cc080" fill="none" stroke-width="1"/></svg><span>测试</span></div>
<div class="btn" style="left:202px;width:86px;"><svg class="ic" width="18" height="17" viewBox="0 0 18 17"><rect x="0.5" y="0.5" width="17" height="16" fill="#e6eeee" stroke="#c0cccc"/><rect x="1.5" y="2.5" width="15" height="12" fill="#2a4c3a"/><line x1="1.5" y1="9.5" x2="16.5" y2="9.5" stroke="#9cc0a8" stroke-width="0.8" stroke-opacity="0.6"/><path d="M2 10 L8 10 L9 6 L10 13 L11 10 L16 10" stroke="#70d070" fill="none" stroke-width="1"/></svg><span><b style="font-weight:normal;font-family:'Liberation Mono',monospace;font-size:15px;letter-spacing:-1px">TDR</b>校验</span></div>
<div class="btn on" style="left:298px;width:95px;"><svg class="ic" width="18" height="17" viewBox="0 0 18 17"><rect x="0.5" y="0.5" width="17" height="16" fill="#d0d4d4" stroke="#a8b0b0"/><rect x="1.5" y="3" width="15" height="11" fill="#fffbe8" stroke="#3a3a3a" stroke-width="0.8"/><rect x="1.5" y="7.5" width="15" height="1.6" fill="#8a7858"/><rect x="1.5" y="9.4" width="15" height="1.6" fill="#c0b090"/></svg><span>图形模式</span></div>
<div class="btn" style="left:402px;width:63px;"><svg class="ic" width="18" height="17" viewBox="0 0 18 17"><rect x="0.5" y="0.5" width="17" height="16" fill="#e6eeee" stroke="#c0cccc"/><rect x="1.5" y="2.5" width="15" height="12" fill="#2a5038"/><line x1="1.5" y1="9.5" x2="16.5" y2="9.5" stroke="#9cc0a8" stroke-width="0.8" stroke-opacity="0.6"/><path d="M2 10 L3 7 L4 12 L6 8 L7 12 L9 6 L10 12 L12 8 L13 12 L15 7 L16 10" stroke="#58d060" fill="none" stroke-width="1"/></svg><span>脉冲</span></div>
<div class="btn" style="left:473px;width:63px;"><svg class="ic" width="18" height="17" viewBox="0 0 18 17"><rect x="0.5" y="0.5" width="17" height="16" fill="#e6eeee" stroke="#c0cccc"/><rect x="1.5" y="2.5" width="15" height="12" fill="#3e3e2c"/><line x1="1.5" y1="9.5" x2="16.5" y2="9.5" stroke="#9cc0a8" stroke-width="0.8" stroke-opacity="0.6"/><path d="M2 10 L7 10 L9 6 L11 12 L13 10 L16 10" stroke="#b8c070" fill="none" stroke-width="1"/></svg><span>反射</span></div>
<div class="btn" style="left:546px;width:94px;"><svg class="ic" width="18" height="17" viewBox="0 0 18 17"><rect x="0.5" y="0.5" width="17" height="17" fill="#e2e2e2" stroke="#b0b0b0"/><path d="M2 3 L9 9 L16 3 M2 14 L9 9 L16 15" stroke="#909090" stroke-width="1.3" fill="none"/></svg><span>详细信息</span></div>
<div class="btn" style="left:650px;width:62px;"><svg class="ic" width="18" height="19" viewBox="0 0 18 19"><rect x="0" y="1" width="17" height="18" fill="#c8dcf4"/><rect x="0" y="1" width="4.5" height="18" fill="#7894b8"/><rect x="0" y="9" width="4.5" height="10" fill="#8a9cc8"/><line x1="7" y1="6" x2="15" y2="6" stroke="#a8b8d0"/><line x1="7" y1="11" x2="15" y2="11" stroke="#b8c8e0"/></svg><span>报告</span></div>

<div class="a" style="left:58px;top:94px;width:297px;height:19px;border:1px solid #b8b8b8;background:linear-gradient(#fafafa,#ededed);font-family:'Liberation Mono',monospace;font-size:14px;letter-spacing:-0.4px;line-height:21px;color:#444;padding-left:4px;box-sizing:content-box;">Restore Range Band Default Positions</div>

<div class="a lbl" style="left:938px;top:55px;letter-spacing:0.5px;">可用的线芯</div>
<div class="a" style="left:1028px;top:52px;width:60px;height:23px;border:1px solid #aaa;background:#fff;font-family:'Liberation Serif',serif;font-size:15px;line-height:23px;color:#333;padding-left:4px;">L1</div>
<div class="a" style="left:1069px;top:54px;width:14px;height:20px;background:linear-gradient(#e4eef8,#b4cce8);border:1px solid #8aa8cc;border-radius:2px;"><div style="position:absolute;left:3px;top:8px;width:0;height:0;border-left:5px solid transparent;border-right:5px solid transparent;border-top:5px solid #2a5a98;"></div></div>

<!-- sidebar -->
<div class="a" style="left:4px;top:-3px;width:27px;height:3px;border-bottom:1px solid #a8b8c8;"></div>
<div class="a" style="left:2px;top:10px;width:28px;height:31px;border:1px solid #b8c4d0;background:#fff6dc;"></div>
<div class="a" style="left:6px;top:14px;width:23px;height:25px;background:#e9991f;"></div>
<div class="a" style="left:11px;top:17px;width:13px;height:19px;background:#fff6dc;"></div>
<div class="a" style="left:14px;top:21px;width:7px;height:10px;border:1px solid #d8c8a0;"></div>

<div class="a" style="left:2px;top:53px;width:28px;height:31px;border:1px solid #b8c4d0;background:#fff6dc;"></div>
<div class="a" style="left:4px;top:56px;width:25px;height:26px;background:#e9991f;"></div>
<div class="a" style="left:9px;top:63px;width:16px;height:2px;background:#fff0c8;"></div>
<div class="a" style="left:10px;top:66px;width:14px;height:8px;background:repeating-linear-gradient(90deg,#fffaf0 0 2px,#e9a030 2px 3px);"></div>
<div class="a" style="left:9px;top:75px;width:16px;height:2px;background:#fff0c8;"></div>

<div class="a" style="left:2px;top:96px;width:28px;height:31px;border:1px solid #b8c4d0;background:#fff6dc;"></div>
<div class="a" style="left:4px;top:99px;width:25px;height:27px;background:#ee9822;"></div>
<svg class="a" style="left:4px;top:99px" width="25" height="27"><circle cx="8" cy="11" r="4.5" fill="none" stroke="#fff0c0" stroke-width="1.6"/><line x1="11" y1="14.5" x2="21" y2="22" stroke="#fff0c0" stroke-width="2.2"/></svg>

<div class="a" style="left:2px;top:138px;width:27px;height:30px;border:2px solid #a4a4ac;background:#ee9a1c;"></div>
<svg class="a" style="left:4px;top:140px" width="27" height="30"><rect x="5" y="5" width="17" height="13" fill="none" stroke="#ffd080" stroke-width="1.4"/><path d="M7 21 L20 21 M13 18 L13 21" stroke="#ffe8b0" stroke-width="2"/></svg>

<div class="a" style="left:4px;top:174px;width:25px;height:25px;border:1px solid #b0b0b8;background:#f8f8f8;"></div>
<div class="a" style="left:10px;top:180px;width:14px;height:14px;background:linear-gradient(90deg,#f0a070,#f8b890,#e89060);border-radius:2px 2px 5px 5px;"></div>
<div class="a" style="left:10px;top:179px;width:14px;height:3px;background:#fcd8c0;border-radius:50%;"></div>

<div class="a" style="left:4px;top:203px;width:25px;height:25px;border:1px solid #98989f;background:#bcbcc2;"></div>
<div class="a" style="left:10px;top:209px;width:14px;height:14px;background:linear-gradient(90deg,#f0a070,#f8b890,#e89060);border-radius:2px 2px 5px 5px;"></div>
<div class="a" style="left:10px;top:208px;width:14px;height:3px;background:#fcd8c0;border-radius:50%;"></div>


<div class="a" style="left:21px;top:711px;width:4px;height:5px;background:#d8d8d8;border-radius:2px;"></div>
<div class="a" style="left:57px;top:708px;width:13px;height:12px;border:1px solid #e0e0e0;"></div>
<div class="a" style="left:60px;top:711px;width:7px;height:7px;background:#d4d4d4;"></div>
<!-- watermark -->
<svg class="a" style="left:834px;top:648px" width="50" height="46" viewBox="0 0 50 46">
<path d="M9 27 L6 34 L14 30" fill="#fff" fill-opacity="0.6" stroke="#9a9a9a" stroke-width="1"/>
<ellipse cx="18" cy="17" rx="16" ry="13" fill="#fff" fill-opacity="0.55" stroke="#a8a8a8" stroke-width="1.1"/>
<circle cx="12" cy="13" r="1.4" fill="#8a8a8a"/><circle cx="23.5" cy="13" r="1.4" fill="#8a8a8a"/>
<ellipse cx="31.6" cy="28.5" rx="13" ry="12" fill="#fff" fill-opacity="0.75" stroke="#8a8a8a" stroke-width="1.2"/>
<path d="M38 39 L42 43 L35 40" fill="#fff" stroke="#8a8a8a" stroke-width="1"/>
<circle cx="27" cy="23.6" r="1.2" fill="#7a7a7a"/><circle cx="37" cy="23.6" r="1.2" fill="#7a7a7a"/>
</svg>
<div class="a" style="left:887px;top:659px;font-size:25.5px;letter-spacing:0.5px;line-height:30px;color:#fff;text-shadow:1px 1px 0 #707070,-0.6px -0.6px 0 #a8a8a8;">高压电力试验</div>
</body></html>
